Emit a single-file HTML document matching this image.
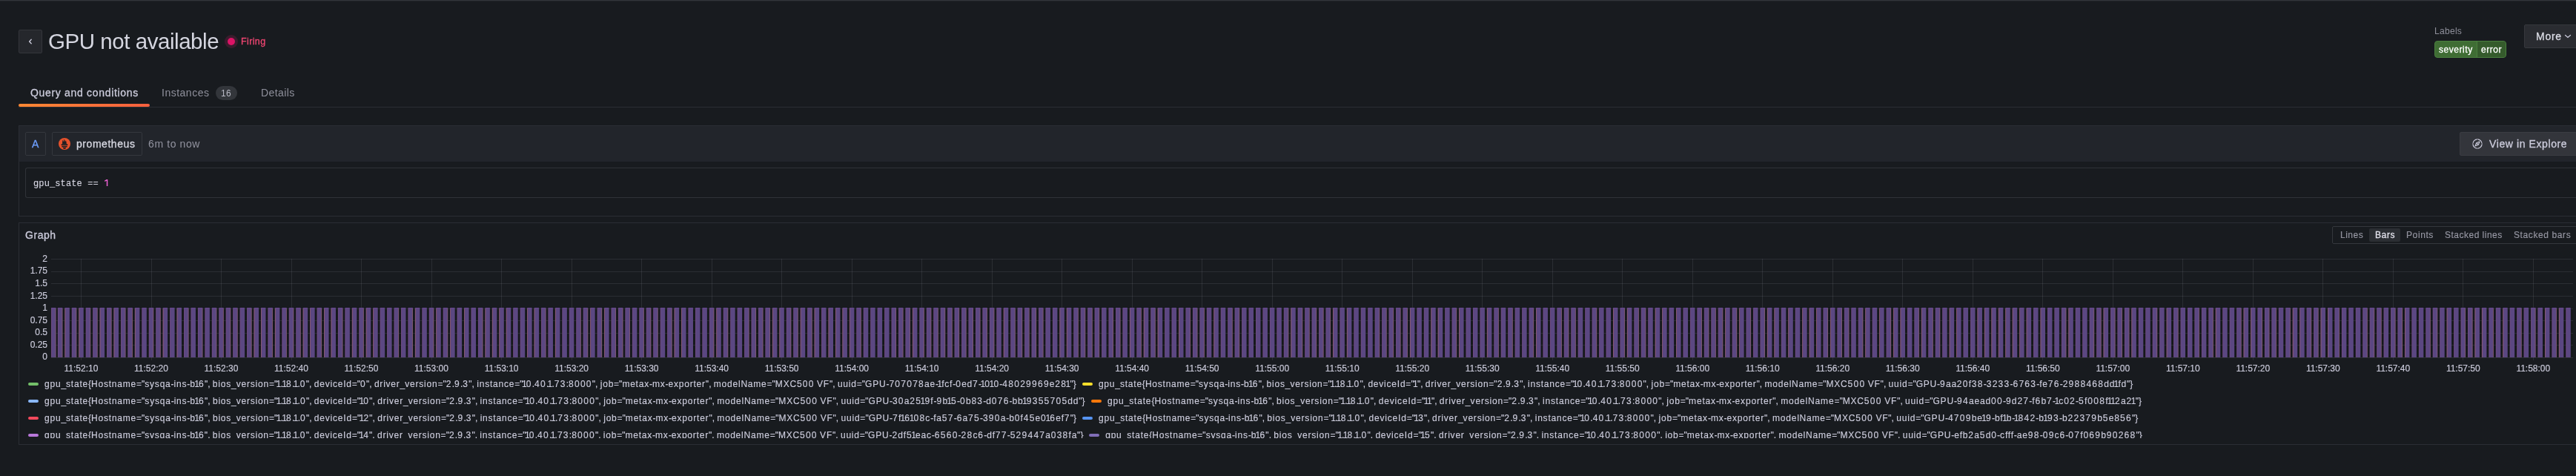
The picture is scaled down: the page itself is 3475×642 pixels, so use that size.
<!DOCTYPE html><html><head><meta charset="utf-8"><style>
.m{-webkit-text-stroke:0.3px currentColor}
.t{-webkit-text-stroke:0.15px currentColor}
.o1{letter-spacing:calc(var(--ls) - 1.624px);margin-left:-1.623px}
.od{letter-spacing:calc(var(--ls) + 0.474px)}
.op{letter-spacing:0}
*{box-sizing:border-box;margin:0;padding:0}
html,body{width:3475px;height:642px;overflow:hidden;background:#181b1f;}
body{position:relative;font-family:"Liberation Sans",sans-serif;color:#ccccdc;}
.a{position:absolute;white-space:pre;}
</style></head><body><div style="position:absolute;left:0;top:0;width:3475px;height:642px;will-change:transform"><div class="a" style="left:0;top:0;width:3475px;height:1px;background:#32353b"></div>
<div class="a" style="left:0;top:1px;width:3475px;height:1px;background:#1f2226"></div>
<div class="a" style="left:25px;top:40px;width:32px;height:32px;background:#25272c;border:1px solid #34363b;border-radius:2px"></div>
<svg class="a" style="left:37px;top:52px" width="8" height="8" viewBox="0 0 8 8"><path d="M5.2 1.2 L2.6 4 L5.2 6.8" stroke="#ccccdc" stroke-width="1.3" fill="none" stroke-linecap="round" stroke-linejoin="round"/></svg>
<div class="a" style="left:65px;top:36px;font-size:29.5px;line-height:40px;letter-spacing:-0.45px;color:#d5d6e0">GPU not available</div>
<div class="a" style="left:303px;top:47px;width:18px;height:18px;border-radius:50%;background:rgba(224,34,110,0.18)"></div>
<div class="a" style="left:307px;top:51px;width:10px;height:10px;border-radius:50%;background:#dc1466"></div>
<div class="a m" style="left:325px;top:48px;font-size:12.5px;line-height:16px;color:#f04672;letter-spacing:0.38px">Firing</div>
<div class="a" style="left:3284px;top:34px;letter-spacing:0.3px;font-size:12px;line-height:16px;color:rgba(204,204,220,0.65)">Labels</div>
<div class="a" style="left:3284px;top:55px;width:97px;height:23px;border-radius:4px;border:1px solid #4a7f3f;background:#3f6d34;overflow:hidden"><div class="a" style="left:56px;top:0;width:40px;height:23px;background:#355b2c;border-left:1px solid #4a7f3f"></div><div class="a m" style="left:5px;top:3px;font-size:12px;line-height:16px;color:#fff;letter-spacing:0.55px">severity</div><div class="a m" style="left:62px;top:3px;font-size:12px;line-height:16px;color:#fff;letter-spacing:0.55px">error</div></div>
<div class="a" style="left:3405px;top:33px;width:90px;height:32px;background:#2a2c31;border:1px solid #36383d;border-radius:2px"></div>
<div class="a m" style="left:3421px;top:41px;font-size:14px;line-height:16px;color:#dcdde6;letter-spacing:0.75px">More</div>
<svg class="a" style="left:3459px;top:45px" width="10" height="8" viewBox="0 0 10 8"><path d="M1.5 2.5 L5 5.5 L8.5 2.5" stroke="#ccccdc" stroke-width="1.2" fill="none" stroke-linecap="round"/></svg>
<div class="a" style="left:25px;top:144px;width:3450px;height:1px;background:#2b2e34"></div>
<div class="a" style="left:25px;top:140px;width:177px;height:4px;border-radius:2px;background:linear-gradient(90deg,#ff8833,#f55f3e)"></div>
<div class="a m" style="left:41px;top:117px;font-size:14px;line-height:16px;color:#ccccdc;letter-spacing:0.68px">Query and conditions</div>
<div class="a" style="left:218px;top:117px;font-size:14px;line-height:16px;color:rgba(204,204,220,0.65);letter-spacing:0.5px">Instances</div>
<div class="a" style="left:291px;top:116px;width:29px;height:19px;border-radius:10px;background:#33363b"></div>
<div class="a" style="left:298px;top:118px;font-size:12px;line-height:16px;color:#b9bac6;letter-spacing:0.3px">16</div>
<div class="a" style="left:352px;top:117px;font-size:14px;line-height:16px;color:rgba(204,204,220,0.65);letter-spacing:0.4px">Details</div>
<div class="a" style="left:25px;top:169px;width:3475px;height:123px;border:1px solid #2b2e34;border-right:none"></div>
<div class="a" style="left:26px;top:170px;width:3475px;height:48px;background:#22252b"></div>
<div class="a" style="left:34px;top:178px;width:28px;height:32px;border:1px solid #34373d;border-radius:2px"></div>
<div class="a m" style="left:43px;top:186px;font-size:14px;line-height:16px;color:#6e9fff">A</div>
<div class="a" style="left:70px;top:178px;width:122px;height:32px;border:1px solid #34373d;border-radius:2px"></div>
<svg class="a" style="left:79px;top:186px" width="16" height="16" viewBox="0 0 16 16"><circle cx="8" cy="8" r="8" fill="#e6522c"/><path d="M5.1 8 C5.0 6.6 5.2 4.4 5.6 2.6 C5.9 3.6 6.3 4.6 6.8 5.4 C6.9 4.0 7.3 2.6 7.7 1.5 C8.1 2.8 8.6 4.4 8.8 5.6 C9.2 4.8 9.6 4.0 9.8 3.3 C10.3 4.6 10.8 6.4 10.8 8 Z" fill="#1d1f23"/><rect x="3.7" y="8.2" width="8.6" height="2.1" rx="0.5" fill="#1d1f23"/><rect x="4.3" y="10.9" width="7.4" height="1.5" rx="0.4" fill="#1d1f23"/><path d="M5.9 13 L10.1 13 C10 14.2 9.1 14.9 8 14.9 C6.9 14.9 6 14.2 5.9 13 Z" fill="#1d1f23"/></svg>
<div class="a m" style="left:103px;top:186px;font-size:14px;line-height:16px;color:#d8d9e3;letter-spacing:0.55px">prometheus</div>
<div class="a" style="left:200px;top:186px;font-size:14px;line-height:16px;color:rgba(204,204,220,0.65);letter-spacing:0.6px">6m to now</div>
<div class="a" style="left:3318px;top:178px;width:200px;height:32px;background:#33353b;border:1px solid #3b3d43;border-radius:2px"></div>
<svg class="a" style="left:3335px;top:187px" width="14" height="14" viewBox="0 0 14 14"><circle cx="7" cy="7" r="6.1" stroke="#ccccdc" stroke-width="1.2" fill="none"/><path d="M7 0.6 V2 M7 12 V13.4 M0.6 7 H2 M12 7 H13.4" stroke="#33353b" stroke-width="0.9"/><path d="M10 4 L8.3 8.3 L4 10 L5.7 5.7 Z" stroke="#ccccdc" stroke-width="1.1" fill="none" stroke-linejoin="round"/><circle cx="7" cy="7" r="0.9" fill="#ccccdc"/></svg>
<div class="a m" style="left:3358px;top:186px;font-size:14px;line-height:16px;color:#ccccdc;letter-spacing:0.6px">View in Explore</div>
<div class="a" style="left:34px;top:226px;width:3475px;height:41px;border:1px solid #2f3237;border-right:none;border-radius:3px"></div>
<div class="a t" style="left:45px;top:240px;font-family:'Liberation Mono',monospace;font-size:12px;line-height:16px;color:#d4d4e0;letter-spacing:0.12px">gpu_state == </div>
<svg class="a" style="left:140px;top:241px" width="8" height="11" viewBox="0 0 8 11"><rect x="3.8" y="1" width="1.5" height="9" fill="#ee62d4"/><path d="M1.2 2.5 L3.8 1 L4.2 2.6 L1.2 3.9 Z" fill="#ee62d4"/></svg>
<div class="a" style="left:25px;top:300px;width:3475px;height:300px;border:1px solid #2b2e34;border-right:none"></div>
<div class="a m" style="left:34px;top:309px;font-size:14px;line-height:16px;color:#ccccdc;letter-spacing:0.55px">Graph</div>
<div class="a" style="left:3146px;top:305px;width:400px;height:24px;border:1px solid #34373d;border-radius:2px"></div>
<div class="a" style="left:3196px;top:308px;width:42px;height:18px;background:#2b2e33;border-radius:2px"></div>
<div class="a t" style="left:3157px;top:309px;font-size:12px;line-height:16px;color:rgba(204,204,220,0.65);letter-spacing:0.5px">Lines</div>
<div class="a m" style="left:3204px;top:309px;font-size:12px;line-height:16px;color:#e0e0ea;letter-spacing:0.6px">Bars</div>
<div class="a t" style="left:3246px;top:309px;font-size:12px;line-height:16px;color:rgba(204,204,220,0.65);letter-spacing:0.6px">Points</div>
<div class="a t" style="left:3298px;top:309px;font-size:12px;line-height:16px;color:rgba(204,204,220,0.65);letter-spacing:0.49px">Stacked lines</div>
<div class="a t" style="left:3391px;top:309px;font-size:12px;line-height:16px;color:rgba(204,204,220,0.65);letter-spacing:0.6px">Stacked bars</div>
<svg class="a" style="left:0;top:0" width="3475" height="642" viewBox="0 0 3475 642" shape-rendering="auto"><rect x="69" y="415" width="3402" height="67" fill="#15181b"/><rect x="69" y="349" width="3402" height="1" fill="rgba(204,204,220,0.11)"/><rect x="69" y="366" width="3402" height="1" fill="rgba(204,204,220,0.11)"/><rect x="69" y="382" width="3402" height="1" fill="rgba(204,204,220,0.11)"/><rect x="69" y="399" width="3402" height="1" fill="rgba(204,204,220,0.11)"/><rect x="69" y="416" width="3402" height="1" fill="rgba(204,204,220,0.11)"/><rect x="69" y="432" width="3402" height="1" fill="rgba(204,204,220,0.11)"/><rect x="69" y="449" width="3402" height="1" fill="rgba(204,204,220,0.11)"/><rect x="69" y="465" width="3402" height="1" fill="rgba(204,204,220,0.11)"/><rect x="69" y="482" width="3402" height="1" fill="rgba(204,204,220,0.11)"/><rect x="109" y="349" width="1" height="137" fill="rgba(204,204,220,0.11)"/><rect x="204" y="349" width="1" height="137" fill="rgba(204,204,220,0.11)"/><rect x="298" y="349" width="1" height="137" fill="rgba(204,204,220,0.11)"/><rect x="393" y="349" width="1" height="137" fill="rgba(204,204,220,0.11)"/><rect x="487" y="349" width="1" height="137" fill="rgba(204,204,220,0.11)"/><rect x="582" y="349" width="1" height="137" fill="rgba(204,204,220,0.11)"/><rect x="676" y="349" width="1" height="137" fill="rgba(204,204,220,0.11)"/><rect x="771" y="349" width="1" height="137" fill="rgba(204,204,220,0.11)"/><rect x="865" y="349" width="1" height="137" fill="rgba(204,204,220,0.11)"/><rect x="960" y="349" width="1" height="137" fill="rgba(204,204,220,0.11)"/><rect x="1054" y="349" width="1" height="137" fill="rgba(204,204,220,0.11)"/><rect x="1149" y="349" width="1" height="137" fill="rgba(204,204,220,0.11)"/><rect x="1243" y="349" width="1" height="137" fill="rgba(204,204,220,0.11)"/><rect x="1338" y="349" width="1" height="137" fill="rgba(204,204,220,0.11)"/><rect x="1432" y="349" width="1" height="137" fill="rgba(204,204,220,0.11)"/><rect x="1527" y="349" width="1" height="137" fill="rgba(204,204,220,0.11)"/><rect x="1621" y="349" width="1" height="137" fill="rgba(204,204,220,0.11)"/><rect x="1716" y="349" width="1" height="137" fill="rgba(204,204,220,0.11)"/><rect x="1810" y="349" width="1" height="137" fill="rgba(204,204,220,0.11)"/><rect x="1905" y="349" width="1" height="137" fill="rgba(204,204,220,0.11)"/><rect x="1999" y="349" width="1" height="137" fill="rgba(204,204,220,0.11)"/><rect x="2094" y="349" width="1" height="137" fill="rgba(204,204,220,0.11)"/><rect x="2188" y="349" width="1" height="137" fill="rgba(204,204,220,0.11)"/><rect x="2283" y="349" width="1" height="137" fill="rgba(204,204,220,0.11)"/><rect x="2377" y="349" width="1" height="137" fill="rgba(204,204,220,0.11)"/><rect x="2472" y="349" width="1" height="137" fill="rgba(204,204,220,0.11)"/><rect x="2566" y="349" width="1" height="137" fill="rgba(204,204,220,0.11)"/><rect x="2661" y="349" width="1" height="137" fill="rgba(204,204,220,0.11)"/><rect x="2755" y="349" width="1" height="137" fill="rgba(204,204,220,0.11)"/><rect x="2850" y="349" width="1" height="137" fill="rgba(204,204,220,0.11)"/><rect x="2944" y="349" width="1" height="137" fill="rgba(204,204,220,0.11)"/><rect x="3039" y="349" width="1" height="137" fill="rgba(204,204,220,0.11)"/><rect x="3133" y="349" width="1" height="137" fill="rgba(204,204,220,0.11)"/><rect x="3228" y="349" width="1" height="137" fill="rgba(204,204,220,0.11)"/><rect x="3322" y="349" width="1" height="137" fill="rgba(204,204,220,0.11)"/><rect x="3417" y="349" width="1" height="137" fill="rgba(204,204,220,0.11)"/><rect x="69.00" y="415" width="6.5" height="67" fill="#5b4782"/><rect x="69.80" y="415" width="4.90" height="1.6" fill="#64468a"/><rect x="69.00" y="416" width="0.9" height="66" fill="rgba(150,80,130,0.35)"/><rect x="74.60" y="416" width="0.9" height="66" fill="rgba(170,110,100,0.45)"/><rect x="77.90" y="415" width="6.5" height="67" fill="#5b4782"/><rect x="78.70" y="415" width="4.90" height="1.6" fill="#64468a"/><rect x="77.90" y="416" width="0.9" height="66" fill="rgba(150,80,130,0.35)"/><rect x="83.50" y="416" width="0.9" height="66" fill="rgba(170,110,100,0.45)"/><rect x="87.35" y="415" width="6.5" height="67" fill="#5b4782"/><rect x="88.15" y="415" width="4.90" height="1.6" fill="#64468a"/><rect x="87.35" y="416" width="0.9" height="66" fill="rgba(150,80,130,0.35)"/><rect x="87.35" y="416" width="0.9" height="66" fill="rgba(170,110,100,0.45)"/><rect x="96.80" y="415" width="6.5" height="67" fill="#5b4782"/><rect x="97.60" y="415" width="4.90" height="1.6" fill="#64468a"/><rect x="96.80" y="416" width="0.9" height="66" fill="rgba(150,80,130,0.35)"/><rect x="102.40" y="416" width="0.9" height="66" fill="rgba(170,110,100,0.45)"/><rect x="106.25" y="415" width="6.5" height="67" fill="#5b4782"/><rect x="107.05" y="415" width="4.90" height="1.6" fill="#64468a"/><rect x="106.25" y="416" width="0.9" height="66" fill="rgba(150,80,130,0.35)"/><rect x="106.25" y="416" width="0.9" height="66" fill="rgba(170,110,100,0.45)"/><rect x="115.70" y="415" width="6.5" height="67" fill="#5b4782"/><rect x="116.50" y="415" width="4.90" height="1.6" fill="#64468a"/><rect x="115.70" y="416" width="0.9" height="66" fill="rgba(150,80,130,0.35)"/><rect x="121.30" y="416" width="0.9" height="66" fill="rgba(170,110,100,0.45)"/><rect x="125.15" y="415" width="6.5" height="67" fill="#5b4782"/><rect x="125.95" y="415" width="4.90" height="1.6" fill="#64468a"/><rect x="125.15" y="416" width="0.9" height="66" fill="rgba(150,80,130,0.35)"/><rect x="130.75" y="416" width="0.9" height="66" fill="rgba(170,110,100,0.45)"/><rect x="134.60" y="415" width="6.5" height="67" fill="#5b4782"/><rect x="135.40" y="415" width="4.90" height="1.6" fill="#64468a"/><rect x="134.60" y="416" width="0.9" height="66" fill="rgba(150,80,130,0.35)"/><rect x="134.60" y="416" width="0.9" height="66" fill="rgba(170,110,100,0.45)"/><rect x="144.05" y="415" width="6.5" height="67" fill="#5b4782"/><rect x="144.85" y="415" width="4.90" height="1.6" fill="#64468a"/><rect x="144.05" y="416" width="0.9" height="66" fill="rgba(150,80,130,0.35)"/><rect x="149.65" y="416" width="0.9" height="66" fill="rgba(170,110,100,0.45)"/><rect x="153.50" y="415" width="6.5" height="67" fill="#5b4782"/><rect x="154.30" y="415" width="4.90" height="1.6" fill="#64468a"/><rect x="153.50" y="416" width="0.9" height="66" fill="rgba(150,80,130,0.35)"/><rect x="153.50" y="416" width="0.9" height="66" fill="rgba(170,110,100,0.45)"/><rect x="162.96" y="415" width="6.5" height="67" fill="#5b4782"/><rect x="163.76" y="415" width="4.90" height="1.6" fill="#64468a"/><rect x="162.96" y="416" width="0.9" height="66" fill="rgba(150,80,130,0.35)"/><rect x="168.56" y="416" width="0.9" height="66" fill="rgba(170,110,100,0.45)"/><rect x="172.41" y="415" width="6.5" height="67" fill="#5b4782"/><rect x="173.21" y="415" width="4.90" height="1.6" fill="#64468a"/><rect x="172.41" y="416" width="0.9" height="66" fill="rgba(150,80,130,0.35)"/><rect x="178.01" y="416" width="0.9" height="66" fill="rgba(170,110,100,0.45)"/><rect x="181.86" y="415" width="6.5" height="67" fill="#5b4782"/><rect x="182.66" y="415" width="4.90" height="1.6" fill="#64468a"/><rect x="181.86" y="416" width="0.9" height="66" fill="rgba(150,80,130,0.35)"/><rect x="181.86" y="416" width="0.9" height="66" fill="rgba(170,110,100,0.45)"/><rect x="191.31" y="415" width="6.5" height="67" fill="#5b4782"/><rect x="192.11" y="415" width="4.90" height="1.6" fill="#64468a"/><rect x="191.31" y="416" width="0.9" height="66" fill="rgba(150,80,130,0.35)"/><rect x="200.76" y="415" width="6.5" height="67" fill="#5b4782"/><rect x="201.56" y="415" width="4.90" height="1.6" fill="#64468a"/><rect x="200.76" y="416" width="0.9" height="66" fill="rgba(150,80,130,0.35)"/><rect x="206.36" y="416" width="0.9" height="66" fill="rgba(170,110,100,0.45)"/><rect x="210.21" y="415" width="6.5" height="67" fill="#5b4782"/><rect x="211.01" y="415" width="4.90" height="1.6" fill="#64468a"/><rect x="210.21" y="416" width="0.9" height="66" fill="rgba(150,80,130,0.35)"/><rect x="215.81" y="416" width="0.9" height="66" fill="rgba(170,110,100,0.45)"/><rect x="219.66" y="415" width="6.5" height="67" fill="#5b4782"/><rect x="220.46" y="415" width="4.90" height="1.6" fill="#64468a"/><rect x="219.66" y="416" width="0.9" height="66" fill="rgba(150,80,130,0.35)"/><rect x="219.66" y="416" width="0.9" height="66" fill="rgba(170,110,100,0.45)"/><rect x="229.11" y="415" width="6.5" height="67" fill="#5b4782"/><rect x="229.91" y="415" width="4.90" height="1.6" fill="#64468a"/><rect x="229.11" y="416" width="0.9" height="66" fill="rgba(150,80,130,0.35)"/><rect x="238.56" y="415" width="6.5" height="67" fill="#5b4782"/><rect x="239.36" y="415" width="4.90" height="1.6" fill="#64468a"/><rect x="238.56" y="416" width="0.9" height="66" fill="rgba(150,80,130,0.35)"/><rect x="238.56" y="416" width="0.9" height="66" fill="rgba(170,110,100,0.45)"/><rect x="248.01" y="415" width="6.5" height="67" fill="#5b4782"/><rect x="248.81" y="415" width="4.90" height="1.6" fill="#64468a"/><rect x="248.01" y="416" width="0.9" height="66" fill="rgba(150,80,130,0.35)"/><rect x="253.61" y="416" width="0.9" height="66" fill="rgba(170,110,100,0.45)"/><rect x="257.46" y="415" width="6.5" height="67" fill="#5b4782"/><rect x="258.26" y="415" width="4.90" height="1.6" fill="#64468a"/><rect x="257.46" y="416" width="0.9" height="66" fill="rgba(150,80,130,0.35)"/><rect x="266.92" y="415" width="6.5" height="67" fill="#5b4782"/><rect x="267.72" y="415" width="4.90" height="1.6" fill="#64468a"/><rect x="266.92" y="416" width="0.9" height="66" fill="rgba(150,80,130,0.35)"/><rect x="272.52" y="416" width="0.9" height="66" fill="rgba(170,110,100,0.45)"/><rect x="276.37" y="415" width="6.5" height="67" fill="#5b4782"/><rect x="277.17" y="415" width="4.90" height="1.6" fill="#64468a"/><rect x="276.37" y="416" width="0.9" height="66" fill="rgba(150,80,130,0.35)"/><rect x="285.82" y="415" width="6.5" height="67" fill="#5b4782"/><rect x="286.62" y="415" width="4.90" height="1.6" fill="#64468a"/><rect x="285.82" y="416" width="0.9" height="66" fill="rgba(150,80,130,0.35)"/><rect x="291.42" y="416" width="0.9" height="66" fill="rgba(170,110,100,0.45)"/><rect x="295.27" y="415" width="6.5" height="67" fill="#5b4782"/><rect x="296.07" y="415" width="4.90" height="1.6" fill="#64468a"/><rect x="295.27" y="416" width="0.9" height="66" fill="rgba(150,80,130,0.35)"/><rect x="300.87" y="416" width="0.9" height="66" fill="rgba(170,110,100,0.45)"/><rect x="304.72" y="415" width="6.5" height="67" fill="#5b4782"/><rect x="305.52" y="415" width="4.90" height="1.6" fill="#64468a"/><rect x="304.72" y="416" width="0.9" height="66" fill="rgba(150,80,130,0.35)"/><rect x="310.32" y="416" width="0.9" height="66" fill="rgba(170,110,100,0.45)"/><rect x="314.17" y="415" width="6.5" height="67" fill="#5b4782"/><rect x="314.97" y="415" width="4.90" height="1.6" fill="#64468a"/><rect x="314.17" y="416" width="0.9" height="66" fill="rgba(150,80,130,0.35)"/><rect x="319.77" y="416" width="0.9" height="66" fill="rgba(170,110,100,0.45)"/><rect x="323.62" y="415" width="6.5" height="67" fill="#5b4782"/><rect x="324.42" y="415" width="4.90" height="1.6" fill="#64468a"/><rect x="323.62" y="416" width="0.9" height="66" fill="rgba(150,80,130,0.35)"/><rect x="333.07" y="415" width="6.5" height="67" fill="#5b4782"/><rect x="333.87" y="415" width="4.90" height="1.6" fill="#64468a"/><rect x="333.07" y="416" width="0.9" height="66" fill="rgba(150,80,130,0.35)"/><rect x="338.67" y="416" width="0.9" height="66" fill="rgba(170,110,100,0.45)"/><rect x="342.52" y="415" width="6.5" height="67" fill="#5b4782"/><rect x="343.32" y="415" width="4.90" height="1.6" fill="#64468a"/><rect x="342.52" y="416" width="0.9" height="66" fill="rgba(150,80,130,0.35)"/><rect x="342.52" y="416" width="0.9" height="66" fill="rgba(170,110,100,0.45)"/><rect x="351.97" y="415" width="6.5" height="67" fill="#5b4782"/><rect x="352.77" y="415" width="4.90" height="1.6" fill="#64468a"/><rect x="351.97" y="416" width="0.9" height="66" fill="rgba(150,80,130,0.35)"/><rect x="351.97" y="416" width="0.9" height="66" fill="rgba(170,110,100,0.45)"/><rect x="361.42" y="415" width="6.5" height="67" fill="#5b4782"/><rect x="362.22" y="415" width="4.90" height="1.6" fill="#64468a"/><rect x="361.42" y="416" width="0.9" height="66" fill="rgba(150,80,130,0.35)"/><rect x="367.02" y="416" width="0.9" height="66" fill="rgba(170,110,100,0.45)"/><rect x="370.88" y="415" width="6.5" height="67" fill="#5b4782"/><rect x="371.68" y="415" width="4.90" height="1.6" fill="#64468a"/><rect x="370.88" y="416" width="0.9" height="66" fill="rgba(150,80,130,0.35)"/><rect x="370.88" y="416" width="0.9" height="66" fill="rgba(170,110,100,0.45)"/><rect x="380.33" y="415" width="6.5" height="67" fill="#5b4782"/><rect x="381.13" y="415" width="4.90" height="1.6" fill="#64468a"/><rect x="380.33" y="416" width="0.9" height="66" fill="rgba(150,80,130,0.35)"/><rect x="385.93" y="416" width="0.9" height="66" fill="rgba(170,110,100,0.45)"/><rect x="389.78" y="415" width="6.5" height="67" fill="#5b4782"/><rect x="390.58" y="415" width="4.90" height="1.6" fill="#64468a"/><rect x="389.78" y="416" width="0.9" height="66" fill="rgba(150,80,130,0.35)"/><rect x="395.38" y="416" width="0.9" height="66" fill="rgba(170,110,100,0.45)"/><rect x="399.23" y="415" width="6.5" height="67" fill="#5b4782"/><rect x="400.03" y="415" width="4.90" height="1.6" fill="#64468a"/><rect x="399.23" y="416" width="0.9" height="66" fill="rgba(150,80,130,0.35)"/><rect x="404.83" y="416" width="0.9" height="66" fill="rgba(170,110,100,0.45)"/><rect x="408.68" y="415" width="6.5" height="67" fill="#5b4782"/><rect x="409.48" y="415" width="4.90" height="1.6" fill="#64468a"/><rect x="408.68" y="416" width="0.9" height="66" fill="rgba(150,80,130,0.35)"/><rect x="408.68" y="416" width="0.9" height="66" fill="rgba(170,110,100,0.45)"/><rect x="418.13" y="415" width="6.5" height="67" fill="#5b4782"/><rect x="418.93" y="415" width="4.90" height="1.6" fill="#64468a"/><rect x="418.13" y="416" width="0.9" height="66" fill="rgba(150,80,130,0.35)"/><rect x="418.13" y="416" width="0.9" height="66" fill="rgba(170,110,100,0.45)"/><rect x="427.58" y="415" width="6.5" height="67" fill="#5b4782"/><rect x="428.38" y="415" width="4.90" height="1.6" fill="#64468a"/><rect x="427.58" y="416" width="0.9" height="66" fill="rgba(150,80,130,0.35)"/><rect x="433.18" y="416" width="0.9" height="66" fill="rgba(170,110,100,0.45)"/><rect x="437.03" y="415" width="6.5" height="67" fill="#5b4782"/><rect x="437.83" y="415" width="4.90" height="1.6" fill="#64468a"/><rect x="437.03" y="416" width="0.9" height="66" fill="rgba(150,80,130,0.35)"/><rect x="437.03" y="416" width="0.9" height="66" fill="rgba(170,110,100,0.45)"/><rect x="446.48" y="415" width="6.5" height="67" fill="#5b4782"/><rect x="447.28" y="415" width="4.90" height="1.6" fill="#64468a"/><rect x="446.48" y="416" width="0.9" height="66" fill="rgba(150,80,130,0.35)"/><rect x="446.48" y="416" width="0.9" height="66" fill="rgba(170,110,100,0.45)"/><rect x="455.93" y="415" width="6.5" height="67" fill="#5b4782"/><rect x="456.73" y="415" width="4.90" height="1.6" fill="#64468a"/><rect x="455.93" y="416" width="0.9" height="66" fill="rgba(150,80,130,0.35)"/><rect x="461.53" y="416" width="0.9" height="66" fill="rgba(170,110,100,0.45)"/><rect x="465.38" y="415" width="6.5" height="67" fill="#5b4782"/><rect x="466.18" y="415" width="4.90" height="1.6" fill="#64468a"/><rect x="465.38" y="416" width="0.9" height="66" fill="rgba(150,80,130,0.35)"/><rect x="474.84" y="415" width="6.5" height="67" fill="#5b4782"/><rect x="475.64" y="415" width="4.90" height="1.6" fill="#64468a"/><rect x="474.84" y="416" width="0.9" height="66" fill="rgba(150,80,130,0.35)"/><rect x="474.84" y="416" width="0.9" height="66" fill="rgba(170,110,100,0.45)"/><rect x="484.29" y="415" width="6.5" height="67" fill="#5b4782"/><rect x="485.09" y="415" width="4.90" height="1.6" fill="#64468a"/><rect x="484.29" y="416" width="0.9" height="66" fill="rgba(150,80,130,0.35)"/><rect x="489.89" y="416" width="0.9" height="66" fill="rgba(170,110,100,0.45)"/><rect x="493.74" y="415" width="6.5" height="67" fill="#5b4782"/><rect x="494.54" y="415" width="4.90" height="1.6" fill="#64468a"/><rect x="493.74" y="416" width="0.9" height="66" fill="rgba(150,80,130,0.35)"/><rect x="493.74" y="416" width="0.9" height="66" fill="rgba(170,110,100,0.45)"/><rect x="503.19" y="415" width="6.5" height="67" fill="#5b4782"/><rect x="503.99" y="415" width="4.90" height="1.6" fill="#64468a"/><rect x="503.19" y="416" width="0.9" height="66" fill="rgba(150,80,130,0.35)"/><rect x="503.19" y="416" width="0.9" height="66" fill="rgba(170,110,100,0.45)"/><rect x="512.64" y="415" width="6.5" height="67" fill="#5b4782"/><rect x="513.44" y="415" width="4.90" height="1.6" fill="#64468a"/><rect x="512.64" y="416" width="0.9" height="66" fill="rgba(150,80,130,0.35)"/><rect x="522.09" y="415" width="6.5" height="67" fill="#5b4782"/><rect x="522.89" y="415" width="4.90" height="1.6" fill="#64468a"/><rect x="522.09" y="416" width="0.9" height="66" fill="rgba(150,80,130,0.35)"/><rect x="531.54" y="415" width="6.5" height="67" fill="#5b4782"/><rect x="532.34" y="415" width="4.90" height="1.6" fill="#64468a"/><rect x="531.54" y="416" width="0.9" height="66" fill="rgba(150,80,130,0.35)"/><rect x="537.14" y="416" width="0.9" height="66" fill="rgba(170,110,100,0.45)"/><rect x="540.99" y="415" width="6.5" height="67" fill="#5b4782"/><rect x="541.79" y="415" width="4.90" height="1.6" fill="#64468a"/><rect x="540.99" y="416" width="0.9" height="66" fill="rgba(150,80,130,0.35)"/><rect x="550.44" y="415" width="6.5" height="67" fill="#5b4782"/><rect x="551.24" y="415" width="4.90" height="1.6" fill="#64468a"/><rect x="550.44" y="416" width="0.9" height="66" fill="rgba(150,80,130,0.35)"/><rect x="556.04" y="416" width="0.9" height="66" fill="rgba(170,110,100,0.45)"/><rect x="559.89" y="415" width="6.5" height="67" fill="#5b4782"/><rect x="560.69" y="415" width="4.90" height="1.6" fill="#64468a"/><rect x="559.89" y="416" width="0.9" height="66" fill="rgba(150,80,130,0.35)"/><rect x="559.89" y="416" width="0.9" height="66" fill="rgba(170,110,100,0.45)"/><rect x="569.34" y="415" width="6.5" height="67" fill="#5b4782"/><rect x="570.14" y="415" width="4.90" height="1.6" fill="#64468a"/><rect x="569.34" y="416" width="0.9" height="66" fill="rgba(150,80,130,0.35)"/><rect x="578.80" y="415" width="6.5" height="67" fill="#5b4782"/><rect x="579.60" y="415" width="4.90" height="1.6" fill="#64468a"/><rect x="578.80" y="416" width="0.9" height="66" fill="rgba(150,80,130,0.35)"/><rect x="584.40" y="416" width="0.9" height="66" fill="rgba(170,110,100,0.45)"/><rect x="588.25" y="415" width="6.5" height="67" fill="#5b4782"/><rect x="589.05" y="415" width="4.90" height="1.6" fill="#64468a"/><rect x="588.25" y="416" width="0.9" height="66" fill="rgba(150,80,130,0.35)"/><rect x="588.25" y="416" width="0.9" height="66" fill="rgba(170,110,100,0.45)"/><rect x="597.70" y="415" width="6.5" height="67" fill="#5b4782"/><rect x="598.50" y="415" width="4.90" height="1.6" fill="#64468a"/><rect x="597.70" y="416" width="0.9" height="66" fill="rgba(150,80,130,0.35)"/><rect x="603.30" y="416" width="0.9" height="66" fill="rgba(170,110,100,0.45)"/><rect x="607.15" y="415" width="6.5" height="67" fill="#5b4782"/><rect x="607.95" y="415" width="4.90" height="1.6" fill="#64468a"/><rect x="607.15" y="416" width="0.9" height="66" fill="rgba(150,80,130,0.35)"/><rect x="607.15" y="416" width="0.9" height="66" fill="rgba(170,110,100,0.45)"/><rect x="616.60" y="415" width="6.5" height="67" fill="#5b4782"/><rect x="617.40" y="415" width="4.90" height="1.6" fill="#64468a"/><rect x="616.60" y="416" width="0.9" height="66" fill="rgba(150,80,130,0.35)"/><rect x="626.05" y="415" width="6.5" height="67" fill="#5b4782"/><rect x="626.85" y="415" width="4.90" height="1.6" fill="#64468a"/><rect x="626.05" y="416" width="0.9" height="66" fill="rgba(150,80,130,0.35)"/><rect x="626.05" y="416" width="0.9" height="66" fill="rgba(170,110,100,0.45)"/><rect x="635.50" y="415" width="6.5" height="67" fill="#5b4782"/><rect x="636.30" y="415" width="4.90" height="1.6" fill="#64468a"/><rect x="635.50" y="416" width="0.9" height="66" fill="rgba(150,80,130,0.35)"/><rect x="644.95" y="415" width="6.5" height="67" fill="#5b4782"/><rect x="645.75" y="415" width="4.90" height="1.6" fill="#64468a"/><rect x="644.95" y="416" width="0.9" height="66" fill="rgba(150,80,130,0.35)"/><rect x="650.55" y="416" width="0.9" height="66" fill="rgba(170,110,100,0.45)"/><rect x="654.40" y="415" width="6.5" height="67" fill="#5b4782"/><rect x="655.20" y="415" width="4.90" height="1.6" fill="#64468a"/><rect x="654.40" y="416" width="0.9" height="66" fill="rgba(150,80,130,0.35)"/><rect x="654.40" y="416" width="0.9" height="66" fill="rgba(170,110,100,0.45)"/><rect x="663.85" y="415" width="6.5" height="67" fill="#5b4782"/><rect x="664.65" y="415" width="4.90" height="1.6" fill="#64468a"/><rect x="663.85" y="416" width="0.9" height="66" fill="rgba(150,80,130,0.35)"/><rect x="663.85" y="416" width="0.9" height="66" fill="rgba(170,110,100,0.45)"/><rect x="673.30" y="415" width="6.5" height="67" fill="#5b4782"/><rect x="674.10" y="415" width="4.90" height="1.6" fill="#64468a"/><rect x="673.30" y="416" width="0.9" height="66" fill="rgba(150,80,130,0.35)"/><rect x="673.30" y="416" width="0.9" height="66" fill="rgba(170,110,100,0.45)"/><rect x="682.75" y="415" width="6.5" height="67" fill="#5b4782"/><rect x="683.55" y="415" width="4.90" height="1.6" fill="#64468a"/><rect x="682.75" y="416" width="0.9" height="66" fill="rgba(150,80,130,0.35)"/><rect x="682.75" y="416" width="0.9" height="66" fill="rgba(170,110,100,0.45)"/><rect x="692.21" y="415" width="6.5" height="67" fill="#5b4782"/><rect x="693.01" y="415" width="4.90" height="1.6" fill="#64468a"/><rect x="692.21" y="416" width="0.9" height="66" fill="rgba(150,80,130,0.35)"/><rect x="701.66" y="415" width="6.5" height="67" fill="#5b4782"/><rect x="702.46" y="415" width="4.90" height="1.6" fill="#64468a"/><rect x="701.66" y="416" width="0.9" height="66" fill="rgba(150,80,130,0.35)"/><rect x="711.11" y="415" width="6.5" height="67" fill="#5b4782"/><rect x="711.91" y="415" width="4.90" height="1.6" fill="#64468a"/><rect x="711.11" y="416" width="0.9" height="66" fill="rgba(150,80,130,0.35)"/><rect x="711.11" y="416" width="0.9" height="66" fill="rgba(170,110,100,0.45)"/><rect x="720.56" y="415" width="6.5" height="67" fill="#5b4782"/><rect x="721.36" y="415" width="4.90" height="1.6" fill="#64468a"/><rect x="720.56" y="416" width="0.9" height="66" fill="rgba(150,80,130,0.35)"/><rect x="720.56" y="416" width="0.9" height="66" fill="rgba(170,110,100,0.45)"/><rect x="730.01" y="415" width="6.5" height="67" fill="#5b4782"/><rect x="730.81" y="415" width="4.90" height="1.6" fill="#64468a"/><rect x="730.01" y="416" width="0.9" height="66" fill="rgba(150,80,130,0.35)"/><rect x="735.61" y="416" width="0.9" height="66" fill="rgba(170,110,100,0.45)"/><rect x="739.46" y="415" width="6.5" height="67" fill="#5b4782"/><rect x="740.26" y="415" width="4.90" height="1.6" fill="#64468a"/><rect x="739.46" y="416" width="0.9" height="66" fill="rgba(150,80,130,0.35)"/><rect x="748.91" y="415" width="6.5" height="67" fill="#5b4782"/><rect x="749.71" y="415" width="4.90" height="1.6" fill="#64468a"/><rect x="748.91" y="416" width="0.9" height="66" fill="rgba(150,80,130,0.35)"/><rect x="748.91" y="416" width="0.9" height="66" fill="rgba(170,110,100,0.45)"/><rect x="758.36" y="415" width="6.5" height="67" fill="#5b4782"/><rect x="759.16" y="415" width="4.90" height="1.6" fill="#64468a"/><rect x="758.36" y="416" width="0.9" height="66" fill="rgba(150,80,130,0.35)"/><rect x="767.81" y="415" width="6.5" height="67" fill="#5b4782"/><rect x="768.61" y="415" width="4.90" height="1.6" fill="#64468a"/><rect x="767.81" y="416" width="0.9" height="66" fill="rgba(150,80,130,0.35)"/><rect x="777.26" y="415" width="6.5" height="67" fill="#5b4782"/><rect x="778.06" y="415" width="4.90" height="1.6" fill="#64468a"/><rect x="777.26" y="416" width="0.9" height="66" fill="rgba(150,80,130,0.35)"/><rect x="782.86" y="416" width="0.9" height="66" fill="rgba(170,110,100,0.45)"/><rect x="786.71" y="415" width="6.5" height="67" fill="#5b4782"/><rect x="787.51" y="415" width="4.90" height="1.6" fill="#64468a"/><rect x="786.71" y="416" width="0.9" height="66" fill="rgba(150,80,130,0.35)"/><rect x="792.31" y="416" width="0.9" height="66" fill="rgba(170,110,100,0.45)"/><rect x="796.17" y="415" width="6.5" height="67" fill="#5b4782"/><rect x="796.97" y="415" width="4.90" height="1.6" fill="#64468a"/><rect x="796.17" y="416" width="0.9" height="66" fill="rgba(150,80,130,0.35)"/><rect x="796.17" y="416" width="0.9" height="66" fill="rgba(170,110,100,0.45)"/><rect x="805.62" y="415" width="6.5" height="67" fill="#5b4782"/><rect x="806.42" y="415" width="4.90" height="1.6" fill="#64468a"/><rect x="805.62" y="416" width="0.9" height="66" fill="rgba(150,80,130,0.35)"/><rect x="811.22" y="416" width="0.9" height="66" fill="rgba(170,110,100,0.45)"/><rect x="815.07" y="415" width="6.5" height="67" fill="#5b4782"/><rect x="815.87" y="415" width="4.90" height="1.6" fill="#64468a"/><rect x="815.07" y="416" width="0.9" height="66" fill="rgba(150,80,130,0.35)"/><rect x="815.07" y="416" width="0.9" height="66" fill="rgba(170,110,100,0.45)"/><rect x="824.52" y="415" width="6.5" height="67" fill="#5b4782"/><rect x="825.32" y="415" width="4.90" height="1.6" fill="#64468a"/><rect x="824.52" y="416" width="0.9" height="66" fill="rgba(150,80,130,0.35)"/><rect x="830.12" y="416" width="0.9" height="66" fill="rgba(170,110,100,0.45)"/><rect x="833.97" y="415" width="6.5" height="67" fill="#5b4782"/><rect x="834.77" y="415" width="4.90" height="1.6" fill="#64468a"/><rect x="833.97" y="416" width="0.9" height="66" fill="rgba(150,80,130,0.35)"/><rect x="839.57" y="416" width="0.9" height="66" fill="rgba(170,110,100,0.45)"/><rect x="843.42" y="415" width="6.5" height="67" fill="#5b4782"/><rect x="844.22" y="415" width="4.90" height="1.6" fill="#64468a"/><rect x="843.42" y="416" width="0.9" height="66" fill="rgba(150,80,130,0.35)"/><rect x="849.02" y="416" width="0.9" height="66" fill="rgba(170,110,100,0.45)"/><rect x="852.87" y="415" width="6.5" height="67" fill="#5b4782"/><rect x="853.67" y="415" width="4.90" height="1.6" fill="#64468a"/><rect x="852.87" y="416" width="0.9" height="66" fill="rgba(150,80,130,0.35)"/><rect x="862.32" y="415" width="6.5" height="67" fill="#5b4782"/><rect x="863.12" y="415" width="4.90" height="1.6" fill="#64468a"/><rect x="862.32" y="416" width="0.9" height="66" fill="rgba(150,80,130,0.35)"/><rect x="867.92" y="416" width="0.9" height="66" fill="rgba(170,110,100,0.45)"/><rect x="871.77" y="415" width="6.5" height="67" fill="#5b4782"/><rect x="872.57" y="415" width="4.90" height="1.6" fill="#64468a"/><rect x="871.77" y="416" width="0.9" height="66" fill="rgba(150,80,130,0.35)"/><rect x="877.37" y="416" width="0.9" height="66" fill="rgba(170,110,100,0.45)"/><rect x="881.22" y="415" width="6.5" height="67" fill="#5b4782"/><rect x="882.02" y="415" width="4.90" height="1.6" fill="#64468a"/><rect x="881.22" y="416" width="0.9" height="66" fill="rgba(150,80,130,0.35)"/><rect x="886.82" y="416" width="0.9" height="66" fill="rgba(170,110,100,0.45)"/><rect x="890.67" y="415" width="6.5" height="67" fill="#5b4782"/><rect x="891.47" y="415" width="4.90" height="1.6" fill="#64468a"/><rect x="890.67" y="416" width="0.9" height="66" fill="rgba(150,80,130,0.35)"/><rect x="900.13" y="415" width="6.5" height="67" fill="#5b4782"/><rect x="900.93" y="415" width="4.90" height="1.6" fill="#64468a"/><rect x="900.13" y="416" width="0.9" height="66" fill="rgba(150,80,130,0.35)"/><rect x="905.73" y="416" width="0.9" height="66" fill="rgba(170,110,100,0.45)"/><rect x="909.58" y="415" width="6.5" height="67" fill="#5b4782"/><rect x="910.38" y="415" width="4.90" height="1.6" fill="#64468a"/><rect x="909.58" y="416" width="0.9" height="66" fill="rgba(150,80,130,0.35)"/><rect x="909.58" y="416" width="0.9" height="66" fill="rgba(170,110,100,0.45)"/><rect x="919.03" y="415" width="6.5" height="67" fill="#5b4782"/><rect x="919.83" y="415" width="4.90" height="1.6" fill="#64468a"/><rect x="919.03" y="416" width="0.9" height="66" fill="rgba(150,80,130,0.35)"/><rect x="919.03" y="416" width="0.9" height="66" fill="rgba(170,110,100,0.45)"/><rect x="928.48" y="415" width="6.5" height="67" fill="#5b4782"/><rect x="929.28" y="415" width="4.90" height="1.6" fill="#64468a"/><rect x="928.48" y="416" width="0.9" height="66" fill="rgba(150,80,130,0.35)"/><rect x="937.93" y="415" width="6.5" height="67" fill="#5b4782"/><rect x="938.73" y="415" width="4.90" height="1.6" fill="#64468a"/><rect x="937.93" y="416" width="0.9" height="66" fill="rgba(150,80,130,0.35)"/><rect x="947.38" y="415" width="6.5" height="67" fill="#5b4782"/><rect x="948.18" y="415" width="4.90" height="1.6" fill="#64468a"/><rect x="947.38" y="416" width="0.9" height="66" fill="rgba(150,80,130,0.35)"/><rect x="956.83" y="415" width="6.5" height="67" fill="#5b4782"/><rect x="957.63" y="415" width="4.90" height="1.6" fill="#64468a"/><rect x="956.83" y="416" width="0.9" height="66" fill="rgba(150,80,130,0.35)"/><rect x="962.43" y="416" width="0.9" height="66" fill="rgba(170,110,100,0.45)"/><rect x="966.28" y="415" width="6.5" height="67" fill="#5b4782"/><rect x="967.08" y="415" width="4.90" height="1.6" fill="#64468a"/><rect x="966.28" y="416" width="0.9" height="66" fill="rgba(150,80,130,0.35)"/><rect x="966.28" y="416" width="0.9" height="66" fill="rgba(170,110,100,0.45)"/><rect x="975.73" y="415" width="6.5" height="67" fill="#5b4782"/><rect x="976.53" y="415" width="4.90" height="1.6" fill="#64468a"/><rect x="975.73" y="416" width="0.9" height="66" fill="rgba(150,80,130,0.35)"/><rect x="981.33" y="416" width="0.9" height="66" fill="rgba(170,110,100,0.45)"/><rect x="985.18" y="415" width="6.5" height="67" fill="#5b4782"/><rect x="985.98" y="415" width="4.90" height="1.6" fill="#64468a"/><rect x="985.18" y="416" width="0.9" height="66" fill="rgba(150,80,130,0.35)"/><rect x="994.63" y="415" width="6.5" height="67" fill="#5b4782"/><rect x="995.43" y="415" width="4.90" height="1.6" fill="#64468a"/><rect x="994.63" y="416" width="0.9" height="66" fill="rgba(150,80,130,0.35)"/><rect x="1004.09" y="415" width="6.5" height="67" fill="#5b4782"/><rect x="1004.89" y="415" width="4.90" height="1.6" fill="#64468a"/><rect x="1004.09" y="416" width="0.9" height="66" fill="rgba(150,80,130,0.35)"/><rect x="1009.69" y="416" width="0.9" height="66" fill="rgba(170,110,100,0.45)"/><rect x="1013.54" y="415" width="6.5" height="67" fill="#5b4782"/><rect x="1014.34" y="415" width="4.90" height="1.6" fill="#64468a"/><rect x="1013.54" y="416" width="0.9" height="66" fill="rgba(150,80,130,0.35)"/><rect x="1019.14" y="416" width="0.9" height="66" fill="rgba(170,110,100,0.45)"/><rect x="1022.99" y="415" width="6.5" height="67" fill="#5b4782"/><rect x="1023.79" y="415" width="4.90" height="1.6" fill="#64468a"/><rect x="1022.99" y="416" width="0.9" height="66" fill="rgba(150,80,130,0.35)"/><rect x="1028.59" y="416" width="0.9" height="66" fill="rgba(170,110,100,0.45)"/><rect x="1032.44" y="415" width="6.5" height="67" fill="#5b4782"/><rect x="1033.24" y="415" width="4.90" height="1.6" fill="#64468a"/><rect x="1032.44" y="416" width="0.9" height="66" fill="rgba(150,80,130,0.35)"/><rect x="1038.04" y="416" width="0.9" height="66" fill="rgba(170,110,100,0.45)"/><rect x="1041.89" y="415" width="6.5" height="67" fill="#5b4782"/><rect x="1042.69" y="415" width="4.90" height="1.6" fill="#64468a"/><rect x="1041.89" y="416" width="0.9" height="66" fill="rgba(150,80,130,0.35)"/><rect x="1041.89" y="416" width="0.9" height="66" fill="rgba(170,110,100,0.45)"/><rect x="1051.34" y="415" width="6.5" height="67" fill="#5b4782"/><rect x="1052.14" y="415" width="4.90" height="1.6" fill="#64468a"/><rect x="1051.34" y="416" width="0.9" height="66" fill="rgba(150,80,130,0.35)"/><rect x="1051.34" y="416" width="0.9" height="66" fill="rgba(170,110,100,0.45)"/><rect x="1060.79" y="415" width="6.5" height="67" fill="#5b4782"/><rect x="1061.59" y="415" width="4.90" height="1.6" fill="#64468a"/><rect x="1060.79" y="416" width="0.9" height="66" fill="rgba(150,80,130,0.35)"/><rect x="1066.39" y="416" width="0.9" height="66" fill="rgba(170,110,100,0.45)"/><rect x="1070.24" y="415" width="6.5" height="67" fill="#5b4782"/><rect x="1071.04" y="415" width="4.90" height="1.6" fill="#64468a"/><rect x="1070.24" y="416" width="0.9" height="66" fill="rgba(150,80,130,0.35)"/><rect x="1075.84" y="416" width="0.9" height="66" fill="rgba(170,110,100,0.45)"/><rect x="1079.69" y="415" width="6.5" height="67" fill="#5b4782"/><rect x="1080.49" y="415" width="4.90" height="1.6" fill="#64468a"/><rect x="1079.69" y="416" width="0.9" height="66" fill="rgba(150,80,130,0.35)"/><rect x="1079.69" y="416" width="0.9" height="66" fill="rgba(170,110,100,0.45)"/><rect x="1089.14" y="415" width="6.5" height="67" fill="#5b4782"/><rect x="1089.94" y="415" width="4.90" height="1.6" fill="#64468a"/><rect x="1089.14" y="416" width="0.9" height="66" fill="rgba(150,80,130,0.35)"/><rect x="1094.74" y="416" width="0.9" height="66" fill="rgba(170,110,100,0.45)"/><rect x="1098.59" y="415" width="6.5" height="67" fill="#5b4782"/><rect x="1099.39" y="415" width="4.90" height="1.6" fill="#64468a"/><rect x="1098.59" y="416" width="0.9" height="66" fill="rgba(150,80,130,0.35)"/><rect x="1098.59" y="416" width="0.9" height="66" fill="rgba(170,110,100,0.45)"/><rect x="1108.05" y="415" width="6.5" height="67" fill="#5b4782"/><rect x="1108.85" y="415" width="4.90" height="1.6" fill="#64468a"/><rect x="1108.05" y="416" width="0.9" height="66" fill="rgba(150,80,130,0.35)"/><rect x="1117.50" y="415" width="6.5" height="67" fill="#5b4782"/><rect x="1118.30" y="415" width="4.90" height="1.6" fill="#64468a"/><rect x="1117.50" y="416" width="0.9" height="66" fill="rgba(150,80,130,0.35)"/><rect x="1117.50" y="416" width="0.9" height="66" fill="rgba(170,110,100,0.45)"/><rect x="1126.95" y="415" width="6.5" height="67" fill="#5b4782"/><rect x="1127.75" y="415" width="4.90" height="1.6" fill="#64468a"/><rect x="1126.95" y="416" width="0.9" height="66" fill="rgba(150,80,130,0.35)"/><rect x="1126.95" y="416" width="0.9" height="66" fill="rgba(170,110,100,0.45)"/><rect x="1136.40" y="415" width="6.5" height="67" fill="#5b4782"/><rect x="1137.20" y="415" width="4.90" height="1.6" fill="#64468a"/><rect x="1136.40" y="416" width="0.9" height="66" fill="rgba(150,80,130,0.35)"/><rect x="1136.40" y="416" width="0.9" height="66" fill="rgba(170,110,100,0.45)"/><rect x="1145.85" y="415" width="6.5" height="67" fill="#5b4782"/><rect x="1146.65" y="415" width="4.90" height="1.6" fill="#64468a"/><rect x="1145.85" y="416" width="0.9" height="66" fill="rgba(150,80,130,0.35)"/><rect x="1145.85" y="416" width="0.9" height="66" fill="rgba(170,110,100,0.45)"/><rect x="1155.30" y="415" width="6.5" height="67" fill="#5b4782"/><rect x="1156.10" y="415" width="4.90" height="1.6" fill="#64468a"/><rect x="1155.30" y="416" width="0.9" height="66" fill="rgba(150,80,130,0.35)"/><rect x="1160.90" y="416" width="0.9" height="66" fill="rgba(170,110,100,0.45)"/><rect x="1164.75" y="415" width="6.5" height="67" fill="#5b4782"/><rect x="1165.55" y="415" width="4.90" height="1.6" fill="#64468a"/><rect x="1164.75" y="416" width="0.9" height="66" fill="rgba(150,80,130,0.35)"/><rect x="1174.20" y="415" width="6.5" height="67" fill="#5b4782"/><rect x="1175.00" y="415" width="4.90" height="1.6" fill="#64468a"/><rect x="1174.20" y="416" width="0.9" height="66" fill="rgba(150,80,130,0.35)"/><rect x="1183.65" y="415" width="6.5" height="67" fill="#5b4782"/><rect x="1184.45" y="415" width="4.90" height="1.6" fill="#64468a"/><rect x="1183.65" y="416" width="0.9" height="66" fill="rgba(150,80,130,0.35)"/><rect x="1193.10" y="415" width="6.5" height="67" fill="#5b4782"/><rect x="1193.90" y="415" width="4.90" height="1.6" fill="#64468a"/><rect x="1193.10" y="416" width="0.9" height="66" fill="rgba(150,80,130,0.35)"/><rect x="1202.55" y="415" width="6.5" height="67" fill="#5b4782"/><rect x="1203.35" y="415" width="4.90" height="1.6" fill="#64468a"/><rect x="1202.55" y="416" width="0.9" height="66" fill="rgba(150,80,130,0.35)"/><rect x="1208.15" y="416" width="0.9" height="66" fill="rgba(170,110,100,0.45)"/><rect x="1212.01" y="415" width="6.5" height="67" fill="#5b4782"/><rect x="1212.81" y="415" width="4.90" height="1.6" fill="#64468a"/><rect x="1212.01" y="416" width="0.9" height="66" fill="rgba(150,80,130,0.35)"/><rect x="1217.61" y="416" width="0.9" height="66" fill="rgba(170,110,100,0.45)"/><rect x="1221.46" y="415" width="6.5" height="67" fill="#5b4782"/><rect x="1222.26" y="415" width="4.90" height="1.6" fill="#64468a"/><rect x="1221.46" y="416" width="0.9" height="66" fill="rgba(150,80,130,0.35)"/><rect x="1227.06" y="416" width="0.9" height="66" fill="rgba(170,110,100,0.45)"/><rect x="1230.91" y="415" width="6.5" height="67" fill="#5b4782"/><rect x="1231.71" y="415" width="4.90" height="1.6" fill="#64468a"/><rect x="1230.91" y="416" width="0.9" height="66" fill="rgba(150,80,130,0.35)"/><rect x="1230.91" y="416" width="0.9" height="66" fill="rgba(170,110,100,0.45)"/><rect x="1240.36" y="415" width="6.5" height="67" fill="#5b4782"/><rect x="1241.16" y="415" width="4.90" height="1.6" fill="#64468a"/><rect x="1240.36" y="416" width="0.9" height="66" fill="rgba(150,80,130,0.35)"/><rect x="1245.96" y="416" width="0.9" height="66" fill="rgba(170,110,100,0.45)"/><rect x="1249.81" y="415" width="6.5" height="67" fill="#5b4782"/><rect x="1250.61" y="415" width="4.90" height="1.6" fill="#64468a"/><rect x="1249.81" y="416" width="0.9" height="66" fill="rgba(150,80,130,0.35)"/><rect x="1255.41" y="416" width="0.9" height="66" fill="rgba(170,110,100,0.45)"/><rect x="1259.26" y="415" width="6.5" height="67" fill="#5b4782"/><rect x="1260.06" y="415" width="4.90" height="1.6" fill="#64468a"/><rect x="1259.26" y="416" width="0.9" height="66" fill="rgba(150,80,130,0.35)"/><rect x="1264.86" y="416" width="0.9" height="66" fill="rgba(170,110,100,0.45)"/><rect x="1268.71" y="415" width="6.5" height="67" fill="#5b4782"/><rect x="1269.51" y="415" width="4.90" height="1.6" fill="#64468a"/><rect x="1268.71" y="416" width="0.9" height="66" fill="rgba(150,80,130,0.35)"/><rect x="1274.31" y="416" width="0.9" height="66" fill="rgba(170,110,100,0.45)"/><rect x="1278.16" y="415" width="6.5" height="67" fill="#5b4782"/><rect x="1278.96" y="415" width="4.90" height="1.6" fill="#64468a"/><rect x="1278.16" y="416" width="0.9" height="66" fill="rgba(150,80,130,0.35)"/><rect x="1283.76" y="416" width="0.9" height="66" fill="rgba(170,110,100,0.45)"/><rect x="1287.61" y="415" width="6.5" height="67" fill="#5b4782"/><rect x="1288.41" y="415" width="4.90" height="1.6" fill="#64468a"/><rect x="1287.61" y="416" width="0.9" height="66" fill="rgba(150,80,130,0.35)"/><rect x="1293.21" y="416" width="0.9" height="66" fill="rgba(170,110,100,0.45)"/><rect x="1297.06" y="415" width="6.5" height="67" fill="#5b4782"/><rect x="1297.86" y="415" width="4.90" height="1.6" fill="#64468a"/><rect x="1297.06" y="416" width="0.9" height="66" fill="rgba(150,80,130,0.35)"/><rect x="1302.66" y="416" width="0.9" height="66" fill="rgba(170,110,100,0.45)"/><rect x="1306.51" y="415" width="6.5" height="67" fill="#5b4782"/><rect x="1307.31" y="415" width="4.90" height="1.6" fill="#64468a"/><rect x="1306.51" y="416" width="0.9" height="66" fill="rgba(150,80,130,0.35)"/><rect x="1312.11" y="416" width="0.9" height="66" fill="rgba(170,110,100,0.45)"/><rect x="1315.97" y="415" width="6.5" height="67" fill="#5b4782"/><rect x="1316.77" y="415" width="4.90" height="1.6" fill="#64468a"/><rect x="1315.97" y="416" width="0.9" height="66" fill="rgba(150,80,130,0.35)"/><rect x="1321.57" y="416" width="0.9" height="66" fill="rgba(170,110,100,0.45)"/><rect x="1325.42" y="415" width="6.5" height="67" fill="#5b4782"/><rect x="1326.22" y="415" width="4.90" height="1.6" fill="#64468a"/><rect x="1325.42" y="416" width="0.9" height="66" fill="rgba(150,80,130,0.35)"/><rect x="1331.02" y="416" width="0.9" height="66" fill="rgba(170,110,100,0.45)"/><rect x="1334.87" y="415" width="6.5" height="67" fill="#5b4782"/><rect x="1335.67" y="415" width="4.90" height="1.6" fill="#64468a"/><rect x="1334.87" y="416" width="0.9" height="66" fill="rgba(150,80,130,0.35)"/><rect x="1340.47" y="416" width="0.9" height="66" fill="rgba(170,110,100,0.45)"/><rect x="1344.32" y="415" width="6.5" height="67" fill="#5b4782"/><rect x="1345.12" y="415" width="4.90" height="1.6" fill="#64468a"/><rect x="1344.32" y="416" width="0.9" height="66" fill="rgba(150,80,130,0.35)"/><rect x="1353.77" y="415" width="6.5" height="67" fill="#5b4782"/><rect x="1354.57" y="415" width="4.90" height="1.6" fill="#64468a"/><rect x="1353.77" y="416" width="0.9" height="66" fill="rgba(150,80,130,0.35)"/><rect x="1353.77" y="416" width="0.9" height="66" fill="rgba(170,110,100,0.45)"/><rect x="1363.22" y="415" width="6.5" height="67" fill="#5b4782"/><rect x="1364.02" y="415" width="4.90" height="1.6" fill="#64468a"/><rect x="1363.22" y="416" width="0.9" height="66" fill="rgba(150,80,130,0.35)"/><rect x="1368.82" y="416" width="0.9" height="66" fill="rgba(170,110,100,0.45)"/><rect x="1372.67" y="415" width="6.5" height="67" fill="#5b4782"/><rect x="1373.47" y="415" width="4.90" height="1.6" fill="#64468a"/><rect x="1372.67" y="416" width="0.9" height="66" fill="rgba(150,80,130,0.35)"/><rect x="1378.27" y="416" width="0.9" height="66" fill="rgba(170,110,100,0.45)"/><rect x="1382.12" y="415" width="6.5" height="67" fill="#5b4782"/><rect x="1382.92" y="415" width="4.90" height="1.6" fill="#64468a"/><rect x="1382.12" y="416" width="0.9" height="66" fill="rgba(150,80,130,0.35)"/><rect x="1387.72" y="416" width="0.9" height="66" fill="rgba(170,110,100,0.45)"/><rect x="1391.57" y="415" width="6.5" height="67" fill="#5b4782"/><rect x="1392.37" y="415" width="4.90" height="1.6" fill="#64468a"/><rect x="1391.57" y="416" width="0.9" height="66" fill="rgba(150,80,130,0.35)"/><rect x="1397.17" y="416" width="0.9" height="66" fill="rgba(170,110,100,0.45)"/><rect x="1401.02" y="415" width="6.5" height="67" fill="#5b4782"/><rect x="1401.82" y="415" width="4.90" height="1.6" fill="#64468a"/><rect x="1401.02" y="416" width="0.9" height="66" fill="rgba(150,80,130,0.35)"/><rect x="1406.62" y="416" width="0.9" height="66" fill="rgba(170,110,100,0.45)"/><rect x="1410.47" y="415" width="6.5" height="67" fill="#5b4782"/><rect x="1411.27" y="415" width="4.90" height="1.6" fill="#64468a"/><rect x="1410.47" y="416" width="0.9" height="66" fill="rgba(150,80,130,0.35)"/><rect x="1419.93" y="415" width="6.5" height="67" fill="#5b4782"/><rect x="1420.73" y="415" width="4.90" height="1.6" fill="#64468a"/><rect x="1419.93" y="416" width="0.9" height="66" fill="rgba(150,80,130,0.35)"/><rect x="1429.38" y="415" width="6.5" height="67" fill="#5b4782"/><rect x="1430.18" y="415" width="4.90" height="1.6" fill="#64468a"/><rect x="1429.38" y="416" width="0.9" height="66" fill="rgba(150,80,130,0.35)"/><rect x="1429.38" y="416" width="0.9" height="66" fill="rgba(170,110,100,0.45)"/><rect x="1438.83" y="415" width="6.5" height="67" fill="#5b4782"/><rect x="1439.63" y="415" width="4.90" height="1.6" fill="#64468a"/><rect x="1438.83" y="416" width="0.9" height="66" fill="rgba(150,80,130,0.35)"/><rect x="1438.83" y="416" width="0.9" height="66" fill="rgba(170,110,100,0.45)"/><rect x="1448.28" y="415" width="6.5" height="67" fill="#5b4782"/><rect x="1449.08" y="415" width="4.90" height="1.6" fill="#64468a"/><rect x="1448.28" y="416" width="0.9" height="66" fill="rgba(150,80,130,0.35)"/><rect x="1453.88" y="416" width="0.9" height="66" fill="rgba(170,110,100,0.45)"/><rect x="1457.73" y="415" width="6.5" height="67" fill="#5b4782"/><rect x="1458.53" y="415" width="4.90" height="1.6" fill="#64468a"/><rect x="1457.73" y="416" width="0.9" height="66" fill="rgba(150,80,130,0.35)"/><rect x="1463.33" y="416" width="0.9" height="66" fill="rgba(170,110,100,0.45)"/><rect x="1467.18" y="415" width="6.5" height="67" fill="#5b4782"/><rect x="1467.98" y="415" width="4.90" height="1.6" fill="#64468a"/><rect x="1467.18" y="416" width="0.9" height="66" fill="rgba(150,80,130,0.35)"/><rect x="1472.78" y="416" width="0.9" height="66" fill="rgba(170,110,100,0.45)"/><rect x="1476.63" y="415" width="6.5" height="67" fill="#5b4782"/><rect x="1477.43" y="415" width="4.90" height="1.6" fill="#64468a"/><rect x="1476.63" y="416" width="0.9" height="66" fill="rgba(150,80,130,0.35)"/><rect x="1482.23" y="416" width="0.9" height="66" fill="rgba(170,110,100,0.45)"/><rect x="1486.08" y="415" width="6.5" height="67" fill="#5b4782"/><rect x="1486.88" y="415" width="4.90" height="1.6" fill="#64468a"/><rect x="1486.08" y="416" width="0.9" height="66" fill="rgba(150,80,130,0.35)"/><rect x="1495.53" y="415" width="6.5" height="67" fill="#5b4782"/><rect x="1496.33" y="415" width="4.90" height="1.6" fill="#64468a"/><rect x="1495.53" y="416" width="0.9" height="66" fill="rgba(150,80,130,0.35)"/><rect x="1501.13" y="416" width="0.9" height="66" fill="rgba(170,110,100,0.45)"/><rect x="1504.98" y="415" width="6.5" height="67" fill="#5b4782"/><rect x="1505.78" y="415" width="4.90" height="1.6" fill="#64468a"/><rect x="1504.98" y="416" width="0.9" height="66" fill="rgba(150,80,130,0.35)"/><rect x="1510.58" y="416" width="0.9" height="66" fill="rgba(170,110,100,0.45)"/><rect x="1514.43" y="415" width="6.5" height="67" fill="#5b4782"/><rect x="1515.23" y="415" width="4.90" height="1.6" fill="#64468a"/><rect x="1514.43" y="416" width="0.9" height="66" fill="rgba(150,80,130,0.35)"/><rect x="1523.89" y="415" width="6.5" height="67" fill="#5b4782"/><rect x="1524.69" y="415" width="4.90" height="1.6" fill="#64468a"/><rect x="1523.89" y="416" width="0.9" height="66" fill="rgba(150,80,130,0.35)"/><rect x="1523.89" y="416" width="0.9" height="66" fill="rgba(170,110,100,0.45)"/><rect x="1533.34" y="415" width="6.5" height="67" fill="#5b4782"/><rect x="1534.14" y="415" width="4.90" height="1.6" fill="#64468a"/><rect x="1533.34" y="416" width="0.9" height="66" fill="rgba(150,80,130,0.35)"/><rect x="1538.94" y="416" width="0.9" height="66" fill="rgba(170,110,100,0.45)"/><rect x="1542.79" y="415" width="6.5" height="67" fill="#5b4782"/><rect x="1543.59" y="415" width="4.90" height="1.6" fill="#64468a"/><rect x="1542.79" y="416" width="0.9" height="66" fill="rgba(150,80,130,0.35)"/><rect x="1542.79" y="416" width="0.9" height="66" fill="rgba(170,110,100,0.45)"/><rect x="1552.24" y="415" width="6.5" height="67" fill="#5b4782"/><rect x="1553.04" y="415" width="4.90" height="1.6" fill="#64468a"/><rect x="1552.24" y="416" width="0.9" height="66" fill="rgba(150,80,130,0.35)"/><rect x="1557.84" y="416" width="0.9" height="66" fill="rgba(170,110,100,0.45)"/><rect x="1561.69" y="415" width="6.5" height="67" fill="#5b4782"/><rect x="1562.49" y="415" width="4.90" height="1.6" fill="#64468a"/><rect x="1561.69" y="416" width="0.9" height="66" fill="rgba(150,80,130,0.35)"/><rect x="1561.69" y="416" width="0.9" height="66" fill="rgba(170,110,100,0.45)"/><rect x="1571.14" y="415" width="6.5" height="67" fill="#5b4782"/><rect x="1571.94" y="415" width="4.90" height="1.6" fill="#64468a"/><rect x="1571.14" y="416" width="0.9" height="66" fill="rgba(150,80,130,0.35)"/><rect x="1580.59" y="415" width="6.5" height="67" fill="#5b4782"/><rect x="1581.39" y="415" width="4.90" height="1.6" fill="#64468a"/><rect x="1580.59" y="416" width="0.9" height="66" fill="rgba(150,80,130,0.35)"/><rect x="1590.04" y="415" width="6.5" height="67" fill="#5b4782"/><rect x="1590.84" y="415" width="4.90" height="1.6" fill="#64468a"/><rect x="1590.04" y="416" width="0.9" height="66" fill="rgba(150,80,130,0.35)"/><rect x="1590.04" y="416" width="0.9" height="66" fill="rgba(170,110,100,0.45)"/><rect x="1599.49" y="415" width="6.5" height="67" fill="#5b4782"/><rect x="1600.29" y="415" width="4.90" height="1.6" fill="#64468a"/><rect x="1599.49" y="416" width="0.9" height="66" fill="rgba(150,80,130,0.35)"/><rect x="1605.09" y="416" width="0.9" height="66" fill="rgba(170,110,100,0.45)"/><rect x="1608.94" y="415" width="6.5" height="67" fill="#5b4782"/><rect x="1609.74" y="415" width="4.90" height="1.6" fill="#64468a"/><rect x="1608.94" y="416" width="0.9" height="66" fill="rgba(150,80,130,0.35)"/><rect x="1614.54" y="416" width="0.9" height="66" fill="rgba(170,110,100,0.45)"/><rect x="1618.39" y="415" width="6.5" height="67" fill="#5b4782"/><rect x="1619.19" y="415" width="4.90" height="1.6" fill="#64468a"/><rect x="1618.39" y="416" width="0.9" height="66" fill="rgba(150,80,130,0.35)"/><rect x="1623.99" y="416" width="0.9" height="66" fill="rgba(170,110,100,0.45)"/><rect x="1627.84" y="415" width="6.5" height="67" fill="#5b4782"/><rect x="1628.64" y="415" width="4.90" height="1.6" fill="#64468a"/><rect x="1627.84" y="416" width="0.9" height="66" fill="rgba(150,80,130,0.35)"/><rect x="1637.30" y="415" width="6.5" height="67" fill="#5b4782"/><rect x="1638.10" y="415" width="4.90" height="1.6" fill="#64468a"/><rect x="1637.30" y="416" width="0.9" height="66" fill="rgba(150,80,130,0.35)"/><rect x="1637.30" y="416" width="0.9" height="66" fill="rgba(170,110,100,0.45)"/><rect x="1646.75" y="415" width="6.5" height="67" fill="#5b4782"/><rect x="1647.55" y="415" width="4.90" height="1.6" fill="#64468a"/><rect x="1646.75" y="416" width="0.9" height="66" fill="rgba(150,80,130,0.35)"/><rect x="1656.20" y="415" width="6.5" height="67" fill="#5b4782"/><rect x="1657.00" y="415" width="4.90" height="1.6" fill="#64468a"/><rect x="1656.20" y="416" width="0.9" height="66" fill="rgba(150,80,130,0.35)"/><rect x="1661.80" y="416" width="0.9" height="66" fill="rgba(170,110,100,0.45)"/><rect x="1665.65" y="415" width="6.5" height="67" fill="#5b4782"/><rect x="1666.45" y="415" width="4.90" height="1.6" fill="#64468a"/><rect x="1665.65" y="416" width="0.9" height="66" fill="rgba(150,80,130,0.35)"/><rect x="1671.25" y="416" width="0.9" height="66" fill="rgba(170,110,100,0.45)"/><rect x="1675.10" y="415" width="6.5" height="67" fill="#5b4782"/><rect x="1675.90" y="415" width="4.90" height="1.6" fill="#64468a"/><rect x="1675.10" y="416" width="0.9" height="66" fill="rgba(150,80,130,0.35)"/><rect x="1684.55" y="415" width="6.5" height="67" fill="#5b4782"/><rect x="1685.35" y="415" width="4.90" height="1.6" fill="#64468a"/><rect x="1684.55" y="416" width="0.9" height="66" fill="rgba(150,80,130,0.35)"/><rect x="1694.00" y="415" width="6.5" height="67" fill="#5b4782"/><rect x="1694.80" y="415" width="4.90" height="1.6" fill="#64468a"/><rect x="1694.00" y="416" width="0.9" height="66" fill="rgba(150,80,130,0.35)"/><rect x="1703.45" y="415" width="6.5" height="67" fill="#5b4782"/><rect x="1704.25" y="415" width="4.90" height="1.6" fill="#64468a"/><rect x="1703.45" y="416" width="0.9" height="66" fill="rgba(150,80,130,0.35)"/><rect x="1712.90" y="415" width="6.5" height="67" fill="#5b4782"/><rect x="1713.70" y="415" width="4.90" height="1.6" fill="#64468a"/><rect x="1712.90" y="416" width="0.9" height="66" fill="rgba(150,80,130,0.35)"/><rect x="1722.35" y="415" width="6.5" height="67" fill="#5b4782"/><rect x="1723.15" y="415" width="4.90" height="1.6" fill="#64468a"/><rect x="1722.35" y="416" width="0.9" height="66" fill="rgba(150,80,130,0.35)"/><rect x="1731.80" y="415" width="6.5" height="67" fill="#5b4782"/><rect x="1732.60" y="415" width="4.90" height="1.6" fill="#64468a"/><rect x="1731.80" y="416" width="0.9" height="66" fill="rgba(150,80,130,0.35)"/><rect x="1737.40" y="416" width="0.9" height="66" fill="rgba(170,110,100,0.45)"/><rect x="1741.26" y="415" width="6.5" height="67" fill="#5b4782"/><rect x="1742.06" y="415" width="4.90" height="1.6" fill="#64468a"/><rect x="1741.26" y="416" width="0.9" height="66" fill="rgba(150,80,130,0.35)"/><rect x="1741.26" y="416" width="0.9" height="66" fill="rgba(170,110,100,0.45)"/><rect x="1750.71" y="415" width="6.5" height="67" fill="#5b4782"/><rect x="1751.51" y="415" width="4.90" height="1.6" fill="#64468a"/><rect x="1750.71" y="416" width="0.9" height="66" fill="rgba(150,80,130,0.35)"/><rect x="1756.31" y="416" width="0.9" height="66" fill="rgba(170,110,100,0.45)"/><rect x="1760.16" y="415" width="6.5" height="67" fill="#5b4782"/><rect x="1760.96" y="415" width="4.90" height="1.6" fill="#64468a"/><rect x="1760.16" y="416" width="0.9" height="66" fill="rgba(150,80,130,0.35)"/><rect x="1765.76" y="416" width="0.9" height="66" fill="rgba(170,110,100,0.45)"/><rect x="1769.61" y="415" width="6.5" height="67" fill="#5b4782"/><rect x="1770.41" y="415" width="4.90" height="1.6" fill="#64468a"/><rect x="1769.61" y="416" width="0.9" height="66" fill="rgba(150,80,130,0.35)"/><rect x="1775.21" y="416" width="0.9" height="66" fill="rgba(170,110,100,0.45)"/><rect x="1779.06" y="415" width="6.5" height="67" fill="#5b4782"/><rect x="1779.86" y="415" width="4.90" height="1.6" fill="#64468a"/><rect x="1779.06" y="416" width="0.9" height="66" fill="rgba(150,80,130,0.35)"/><rect x="1784.66" y="416" width="0.9" height="66" fill="rgba(170,110,100,0.45)"/><rect x="1788.51" y="415" width="6.5" height="67" fill="#5b4782"/><rect x="1789.31" y="415" width="4.90" height="1.6" fill="#64468a"/><rect x="1788.51" y="416" width="0.9" height="66" fill="rgba(150,80,130,0.35)"/><rect x="1794.11" y="416" width="0.9" height="66" fill="rgba(170,110,100,0.45)"/><rect x="1797.96" y="415" width="6.5" height="67" fill="#5b4782"/><rect x="1798.76" y="415" width="4.90" height="1.6" fill="#64468a"/><rect x="1797.96" y="416" width="0.9" height="66" fill="rgba(150,80,130,0.35)"/><rect x="1797.96" y="416" width="0.9" height="66" fill="rgba(170,110,100,0.45)"/><rect x="1807.41" y="415" width="6.5" height="67" fill="#5b4782"/><rect x="1808.21" y="415" width="4.90" height="1.6" fill="#64468a"/><rect x="1807.41" y="416" width="0.9" height="66" fill="rgba(150,80,130,0.35)"/><rect x="1816.86" y="415" width="6.5" height="67" fill="#5b4782"/><rect x="1817.66" y="415" width="4.90" height="1.6" fill="#64468a"/><rect x="1816.86" y="416" width="0.9" height="66" fill="rgba(150,80,130,0.35)"/><rect x="1816.86" y="416" width="0.9" height="66" fill="rgba(170,110,100,0.45)"/><rect x="1826.31" y="415" width="6.5" height="67" fill="#5b4782"/><rect x="1827.11" y="415" width="4.90" height="1.6" fill="#64468a"/><rect x="1826.31" y="416" width="0.9" height="66" fill="rgba(150,80,130,0.35)"/><rect x="1835.76" y="415" width="6.5" height="67" fill="#5b4782"/><rect x="1836.56" y="415" width="4.90" height="1.6" fill="#64468a"/><rect x="1835.76" y="416" width="0.9" height="66" fill="rgba(150,80,130,0.35)"/><rect x="1845.22" y="415" width="6.5" height="67" fill="#5b4782"/><rect x="1846.02" y="415" width="4.90" height="1.6" fill="#64468a"/><rect x="1845.22" y="416" width="0.9" height="66" fill="rgba(150,80,130,0.35)"/><rect x="1854.67" y="415" width="6.5" height="67" fill="#5b4782"/><rect x="1855.47" y="415" width="4.90" height="1.6" fill="#64468a"/><rect x="1854.67" y="416" width="0.9" height="66" fill="rgba(150,80,130,0.35)"/><rect x="1860.27" y="416" width="0.9" height="66" fill="rgba(170,110,100,0.45)"/><rect x="1864.12" y="415" width="6.5" height="67" fill="#5b4782"/><rect x="1864.92" y="415" width="4.90" height="1.6" fill="#64468a"/><rect x="1864.12" y="416" width="0.9" height="66" fill="rgba(150,80,130,0.35)"/><rect x="1869.72" y="416" width="0.9" height="66" fill="rgba(170,110,100,0.45)"/><rect x="1873.57" y="415" width="6.5" height="67" fill="#5b4782"/><rect x="1874.37" y="415" width="4.90" height="1.6" fill="#64468a"/><rect x="1873.57" y="416" width="0.9" height="66" fill="rgba(150,80,130,0.35)"/><rect x="1879.17" y="416" width="0.9" height="66" fill="rgba(170,110,100,0.45)"/><rect x="1883.02" y="415" width="6.5" height="67" fill="#5b4782"/><rect x="1883.82" y="415" width="4.90" height="1.6" fill="#64468a"/><rect x="1883.02" y="416" width="0.9" height="66" fill="rgba(150,80,130,0.35)"/><rect x="1888.62" y="416" width="0.9" height="66" fill="rgba(170,110,100,0.45)"/><rect x="1892.47" y="415" width="6.5" height="67" fill="#5b4782"/><rect x="1893.27" y="415" width="4.90" height="1.6" fill="#64468a"/><rect x="1892.47" y="416" width="0.9" height="66" fill="rgba(150,80,130,0.35)"/><rect x="1898.07" y="416" width="0.9" height="66" fill="rgba(170,110,100,0.45)"/><rect x="1901.92" y="415" width="6.5" height="67" fill="#5b4782"/><rect x="1902.72" y="415" width="4.90" height="1.6" fill="#64468a"/><rect x="1901.92" y="416" width="0.9" height="66" fill="rgba(150,80,130,0.35)"/><rect x="1901.92" y="416" width="0.9" height="66" fill="rgba(170,110,100,0.45)"/><rect x="1911.37" y="415" width="6.5" height="67" fill="#5b4782"/><rect x="1912.17" y="415" width="4.90" height="1.6" fill="#64468a"/><rect x="1911.37" y="416" width="0.9" height="66" fill="rgba(150,80,130,0.35)"/><rect x="1920.82" y="415" width="6.5" height="67" fill="#5b4782"/><rect x="1921.62" y="415" width="4.90" height="1.6" fill="#64468a"/><rect x="1920.82" y="416" width="0.9" height="66" fill="rgba(150,80,130,0.35)"/><rect x="1930.27" y="415" width="6.5" height="67" fill="#5b4782"/><rect x="1931.07" y="415" width="4.90" height="1.6" fill="#64468a"/><rect x="1930.27" y="416" width="0.9" height="66" fill="rgba(150,80,130,0.35)"/><rect x="1930.27" y="416" width="0.9" height="66" fill="rgba(170,110,100,0.45)"/><rect x="1939.72" y="415" width="6.5" height="67" fill="#5b4782"/><rect x="1940.52" y="415" width="4.90" height="1.6" fill="#64468a"/><rect x="1939.72" y="416" width="0.9" height="66" fill="rgba(150,80,130,0.35)"/><rect x="1939.72" y="416" width="0.9" height="66" fill="rgba(170,110,100,0.45)"/><rect x="1949.18" y="415" width="6.5" height="67" fill="#5b4782"/><rect x="1949.98" y="415" width="4.90" height="1.6" fill="#64468a"/><rect x="1949.18" y="416" width="0.9" height="66" fill="rgba(150,80,130,0.35)"/><rect x="1958.63" y="415" width="6.5" height="67" fill="#5b4782"/><rect x="1959.43" y="415" width="4.90" height="1.6" fill="#64468a"/><rect x="1958.63" y="416" width="0.9" height="66" fill="rgba(150,80,130,0.35)"/><rect x="1964.23" y="416" width="0.9" height="66" fill="rgba(170,110,100,0.45)"/><rect x="1968.08" y="415" width="6.5" height="67" fill="#5b4782"/><rect x="1968.88" y="415" width="4.90" height="1.6" fill="#64468a"/><rect x="1968.08" y="416" width="0.9" height="66" fill="rgba(150,80,130,0.35)"/><rect x="1968.08" y="416" width="0.9" height="66" fill="rgba(170,110,100,0.45)"/><rect x="1977.53" y="415" width="6.5" height="67" fill="#5b4782"/><rect x="1978.33" y="415" width="4.90" height="1.6" fill="#64468a"/><rect x="1977.53" y="416" width="0.9" height="66" fill="rgba(150,80,130,0.35)"/><rect x="1986.98" y="415" width="6.5" height="67" fill="#5b4782"/><rect x="1987.78" y="415" width="4.90" height="1.6" fill="#64468a"/><rect x="1986.98" y="416" width="0.9" height="66" fill="rgba(150,80,130,0.35)"/><rect x="1996.43" y="415" width="6.5" height="67" fill="#5b4782"/><rect x="1997.23" y="415" width="4.90" height="1.6" fill="#64468a"/><rect x="1996.43" y="416" width="0.9" height="66" fill="rgba(150,80,130,0.35)"/><rect x="2005.88" y="415" width="6.5" height="67" fill="#5b4782"/><rect x="2006.68" y="415" width="4.90" height="1.6" fill="#64468a"/><rect x="2005.88" y="416" width="0.9" height="66" fill="rgba(150,80,130,0.35)"/><rect x="2005.88" y="416" width="0.9" height="66" fill="rgba(170,110,100,0.45)"/><rect x="2015.33" y="415" width="6.5" height="67" fill="#5b4782"/><rect x="2016.13" y="415" width="4.90" height="1.6" fill="#64468a"/><rect x="2015.33" y="416" width="0.9" height="66" fill="rgba(150,80,130,0.35)"/><rect x="2020.93" y="416" width="0.9" height="66" fill="rgba(170,110,100,0.45)"/><rect x="2024.78" y="415" width="6.5" height="67" fill="#5b4782"/><rect x="2025.58" y="415" width="4.90" height="1.6" fill="#64468a"/><rect x="2024.78" y="416" width="0.9" height="66" fill="rgba(150,80,130,0.35)"/><rect x="2034.23" y="415" width="6.5" height="67" fill="#5b4782"/><rect x="2035.03" y="415" width="4.90" height="1.6" fill="#64468a"/><rect x="2034.23" y="416" width="0.9" height="66" fill="rgba(150,80,130,0.35)"/><rect x="2039.83" y="416" width="0.9" height="66" fill="rgba(170,110,100,0.45)"/><rect x="2043.68" y="415" width="6.5" height="67" fill="#5b4782"/><rect x="2044.48" y="415" width="4.90" height="1.6" fill="#64468a"/><rect x="2043.68" y="416" width="0.9" height="66" fill="rgba(150,80,130,0.35)"/><rect x="2053.14" y="415" width="6.5" height="67" fill="#5b4782"/><rect x="2053.94" y="415" width="4.90" height="1.6" fill="#64468a"/><rect x="2053.14" y="416" width="0.9" height="66" fill="rgba(150,80,130,0.35)"/><rect x="2062.59" y="415" width="6.5" height="67" fill="#5b4782"/><rect x="2063.39" y="415" width="4.90" height="1.6" fill="#64468a"/><rect x="2062.59" y="416" width="0.9" height="66" fill="rgba(150,80,130,0.35)"/><rect x="2068.19" y="416" width="0.9" height="66" fill="rgba(170,110,100,0.45)"/><rect x="2072.04" y="415" width="6.5" height="67" fill="#5b4782"/><rect x="2072.84" y="415" width="4.90" height="1.6" fill="#64468a"/><rect x="2072.04" y="416" width="0.9" height="66" fill="rgba(150,80,130,0.35)"/><rect x="2072.04" y="416" width="0.9" height="66" fill="rgba(170,110,100,0.45)"/><rect x="2081.49" y="415" width="6.5" height="67" fill="#5b4782"/><rect x="2082.29" y="415" width="4.90" height="1.6" fill="#64468a"/><rect x="2081.49" y="416" width="0.9" height="66" fill="rgba(150,80,130,0.35)"/><rect x="2090.94" y="415" width="6.5" height="67" fill="#5b4782"/><rect x="2091.74" y="415" width="4.90" height="1.6" fill="#64468a"/><rect x="2090.94" y="416" width="0.9" height="66" fill="rgba(150,80,130,0.35)"/><rect x="2100.39" y="415" width="6.5" height="67" fill="#5b4782"/><rect x="2101.19" y="415" width="4.90" height="1.6" fill="#64468a"/><rect x="2100.39" y="416" width="0.9" height="66" fill="rgba(150,80,130,0.35)"/><rect x="2105.99" y="416" width="0.9" height="66" fill="rgba(170,110,100,0.45)"/><rect x="2109.84" y="415" width="6.5" height="67" fill="#5b4782"/><rect x="2110.64" y="415" width="4.90" height="1.6" fill="#64468a"/><rect x="2109.84" y="416" width="0.9" height="66" fill="rgba(150,80,130,0.35)"/><rect x="2115.44" y="416" width="0.9" height="66" fill="rgba(170,110,100,0.45)"/><rect x="2119.29" y="415" width="6.5" height="67" fill="#5b4782"/><rect x="2120.09" y="415" width="4.90" height="1.6" fill="#64468a"/><rect x="2119.29" y="416" width="0.9" height="66" fill="rgba(150,80,130,0.35)"/><rect x="2124.89" y="416" width="0.9" height="66" fill="rgba(170,110,100,0.45)"/><rect x="2128.74" y="415" width="6.5" height="67" fill="#5b4782"/><rect x="2129.54" y="415" width="4.90" height="1.6" fill="#64468a"/><rect x="2128.74" y="416" width="0.9" height="66" fill="rgba(150,80,130,0.35)"/><rect x="2138.19" y="415" width="6.5" height="67" fill="#5b4782"/><rect x="2138.99" y="415" width="4.90" height="1.6" fill="#64468a"/><rect x="2138.19" y="416" width="0.9" height="66" fill="rgba(150,80,130,0.35)"/><rect x="2147.64" y="415" width="6.5" height="67" fill="#5b4782"/><rect x="2148.44" y="415" width="4.90" height="1.6" fill="#64468a"/><rect x="2147.64" y="416" width="0.9" height="66" fill="rgba(150,80,130,0.35)"/><rect x="2153.24" y="416" width="0.9" height="66" fill="rgba(170,110,100,0.45)"/><rect x="2157.10" y="415" width="6.5" height="67" fill="#5b4782"/><rect x="2157.90" y="415" width="4.90" height="1.6" fill="#64468a"/><rect x="2157.10" y="416" width="0.9" height="66" fill="rgba(150,80,130,0.35)"/><rect x="2166.55" y="415" width="6.5" height="67" fill="#5b4782"/><rect x="2167.35" y="415" width="4.90" height="1.6" fill="#64468a"/><rect x="2166.55" y="416" width="0.9" height="66" fill="rgba(150,80,130,0.35)"/><rect x="2176.00" y="415" width="6.5" height="67" fill="#5b4782"/><rect x="2176.80" y="415" width="4.90" height="1.6" fill="#64468a"/><rect x="2176.00" y="416" width="0.9" height="66" fill="rgba(150,80,130,0.35)"/><rect x="2176.00" y="416" width="0.9" height="66" fill="rgba(170,110,100,0.45)"/><rect x="2185.45" y="415" width="6.5" height="67" fill="#5b4782"/><rect x="2186.25" y="415" width="4.90" height="1.6" fill="#64468a"/><rect x="2185.45" y="416" width="0.9" height="66" fill="rgba(150,80,130,0.35)"/><rect x="2191.05" y="416" width="0.9" height="66" fill="rgba(170,110,100,0.45)"/><rect x="2194.90" y="415" width="6.5" height="67" fill="#5b4782"/><rect x="2195.70" y="415" width="4.90" height="1.6" fill="#64468a"/><rect x="2194.90" y="416" width="0.9" height="66" fill="rgba(150,80,130,0.35)"/><rect x="2194.90" y="416" width="0.9" height="66" fill="rgba(170,110,100,0.45)"/><rect x="2204.35" y="415" width="6.5" height="67" fill="#5b4782"/><rect x="2205.15" y="415" width="4.90" height="1.6" fill="#64468a"/><rect x="2204.35" y="416" width="0.9" height="66" fill="rgba(150,80,130,0.35)"/><rect x="2209.95" y="416" width="0.9" height="66" fill="rgba(170,110,100,0.45)"/><rect x="2213.80" y="415" width="6.5" height="67" fill="#5b4782"/><rect x="2214.60" y="415" width="4.90" height="1.6" fill="#64468a"/><rect x="2213.80" y="416" width="0.9" height="66" fill="rgba(150,80,130,0.35)"/><rect x="2219.40" y="416" width="0.9" height="66" fill="rgba(170,110,100,0.45)"/><rect x="2223.25" y="415" width="6.5" height="67" fill="#5b4782"/><rect x="2224.05" y="415" width="4.90" height="1.6" fill="#64468a"/><rect x="2223.25" y="416" width="0.9" height="66" fill="rgba(150,80,130,0.35)"/><rect x="2232.70" y="415" width="6.5" height="67" fill="#5b4782"/><rect x="2233.50" y="415" width="4.90" height="1.6" fill="#64468a"/><rect x="2232.70" y="416" width="0.9" height="66" fill="rgba(150,80,130,0.35)"/><rect x="2232.70" y="416" width="0.9" height="66" fill="rgba(170,110,100,0.45)"/><rect x="2242.15" y="415" width="6.5" height="67" fill="#5b4782"/><rect x="2242.95" y="415" width="4.90" height="1.6" fill="#64468a"/><rect x="2242.15" y="416" width="0.9" height="66" fill="rgba(150,80,130,0.35)"/><rect x="2242.15" y="416" width="0.9" height="66" fill="rgba(170,110,100,0.45)"/><rect x="2251.60" y="415" width="6.5" height="67" fill="#5b4782"/><rect x="2252.40" y="415" width="4.90" height="1.6" fill="#64468a"/><rect x="2251.60" y="416" width="0.9" height="66" fill="rgba(150,80,130,0.35)"/><rect x="2261.06" y="415" width="6.5" height="67" fill="#5b4782"/><rect x="2261.86" y="415" width="4.90" height="1.6" fill="#64468a"/><rect x="2261.06" y="416" width="0.9" height="66" fill="rgba(150,80,130,0.35)"/><rect x="2261.06" y="416" width="0.9" height="66" fill="rgba(170,110,100,0.45)"/><rect x="2270.51" y="415" width="6.5" height="67" fill="#5b4782"/><rect x="2271.31" y="415" width="4.90" height="1.6" fill="#64468a"/><rect x="2270.51" y="416" width="0.9" height="66" fill="rgba(150,80,130,0.35)"/><rect x="2279.96" y="415" width="6.5" height="67" fill="#5b4782"/><rect x="2280.76" y="415" width="4.90" height="1.6" fill="#64468a"/><rect x="2279.96" y="416" width="0.9" height="66" fill="rgba(150,80,130,0.35)"/><rect x="2289.41" y="415" width="6.5" height="67" fill="#5b4782"/><rect x="2290.21" y="415" width="4.90" height="1.6" fill="#64468a"/><rect x="2289.41" y="416" width="0.9" height="66" fill="rgba(150,80,130,0.35)"/><rect x="2295.01" y="416" width="0.9" height="66" fill="rgba(170,110,100,0.45)"/><rect x="2298.86" y="415" width="6.5" height="67" fill="#5b4782"/><rect x="2299.66" y="415" width="4.90" height="1.6" fill="#64468a"/><rect x="2298.86" y="416" width="0.9" height="66" fill="rgba(150,80,130,0.35)"/><rect x="2304.46" y="416" width="0.9" height="66" fill="rgba(170,110,100,0.45)"/><rect x="2308.31" y="415" width="6.5" height="67" fill="#5b4782"/><rect x="2309.11" y="415" width="4.90" height="1.6" fill="#64468a"/><rect x="2308.31" y="416" width="0.9" height="66" fill="rgba(150,80,130,0.35)"/><rect x="2313.91" y="416" width="0.9" height="66" fill="rgba(170,110,100,0.45)"/><rect x="2317.76" y="415" width="6.5" height="67" fill="#5b4782"/><rect x="2318.56" y="415" width="4.90" height="1.6" fill="#64468a"/><rect x="2317.76" y="416" width="0.9" height="66" fill="rgba(150,80,130,0.35)"/><rect x="2323.36" y="416" width="0.9" height="66" fill="rgba(170,110,100,0.45)"/><rect x="2327.21" y="415" width="6.5" height="67" fill="#5b4782"/><rect x="2328.01" y="415" width="4.90" height="1.6" fill="#64468a"/><rect x="2327.21" y="416" width="0.9" height="66" fill="rgba(150,80,130,0.35)"/><rect x="2327.21" y="416" width="0.9" height="66" fill="rgba(170,110,100,0.45)"/><rect x="2336.66" y="415" width="6.5" height="67" fill="#5b4782"/><rect x="2337.46" y="415" width="4.90" height="1.6" fill="#64468a"/><rect x="2336.66" y="416" width="0.9" height="66" fill="rgba(150,80,130,0.35)"/><rect x="2342.26" y="416" width="0.9" height="66" fill="rgba(170,110,100,0.45)"/><rect x="2346.11" y="415" width="6.5" height="67" fill="#5b4782"/><rect x="2346.91" y="415" width="4.90" height="1.6" fill="#64468a"/><rect x="2346.11" y="416" width="0.9" height="66" fill="rgba(150,80,130,0.35)"/><rect x="2346.11" y="416" width="0.9" height="66" fill="rgba(170,110,100,0.45)"/><rect x="2355.56" y="415" width="6.5" height="67" fill="#5b4782"/><rect x="2356.36" y="415" width="4.90" height="1.6" fill="#64468a"/><rect x="2355.56" y="416" width="0.9" height="66" fill="rgba(150,80,130,0.35)"/><rect x="2361.16" y="416" width="0.9" height="66" fill="rgba(170,110,100,0.45)"/><rect x="2365.02" y="415" width="6.5" height="67" fill="#5b4782"/><rect x="2365.82" y="415" width="4.90" height="1.6" fill="#64468a"/><rect x="2365.02" y="416" width="0.9" height="66" fill="rgba(150,80,130,0.35)"/><rect x="2374.47" y="415" width="6.5" height="67" fill="#5b4782"/><rect x="2375.27" y="415" width="4.90" height="1.6" fill="#64468a"/><rect x="2374.47" y="416" width="0.9" height="66" fill="rgba(150,80,130,0.35)"/><rect x="2380.07" y="416" width="0.9" height="66" fill="rgba(170,110,100,0.45)"/><rect x="2383.92" y="415" width="6.5" height="67" fill="#5b4782"/><rect x="2384.72" y="415" width="4.90" height="1.6" fill="#64468a"/><rect x="2383.92" y="416" width="0.9" height="66" fill="rgba(150,80,130,0.35)"/><rect x="2383.92" y="416" width="0.9" height="66" fill="rgba(170,110,100,0.45)"/><rect x="2393.37" y="415" width="6.5" height="67" fill="#5b4782"/><rect x="2394.17" y="415" width="4.90" height="1.6" fill="#64468a"/><rect x="2393.37" y="416" width="0.9" height="66" fill="rgba(150,80,130,0.35)"/><rect x="2393.37" y="416" width="0.9" height="66" fill="rgba(170,110,100,0.45)"/><rect x="2402.82" y="415" width="6.5" height="67" fill="#5b4782"/><rect x="2403.62" y="415" width="4.90" height="1.6" fill="#64468a"/><rect x="2402.82" y="416" width="0.9" height="66" fill="rgba(150,80,130,0.35)"/><rect x="2412.27" y="415" width="6.5" height="67" fill="#5b4782"/><rect x="2413.07" y="415" width="4.90" height="1.6" fill="#64468a"/><rect x="2412.27" y="416" width="0.9" height="66" fill="rgba(150,80,130,0.35)"/><rect x="2412.27" y="416" width="0.9" height="66" fill="rgba(170,110,100,0.45)"/><rect x="2421.72" y="415" width="6.5" height="67" fill="#5b4782"/><rect x="2422.52" y="415" width="4.90" height="1.6" fill="#64468a"/><rect x="2421.72" y="416" width="0.9" height="66" fill="rgba(150,80,130,0.35)"/><rect x="2431.17" y="415" width="6.5" height="67" fill="#5b4782"/><rect x="2431.97" y="415" width="4.90" height="1.6" fill="#64468a"/><rect x="2431.17" y="416" width="0.9" height="66" fill="rgba(150,80,130,0.35)"/><rect x="2431.17" y="416" width="0.9" height="66" fill="rgba(170,110,100,0.45)"/><rect x="2440.62" y="415" width="6.5" height="67" fill="#5b4782"/><rect x="2441.42" y="415" width="4.90" height="1.6" fill="#64468a"/><rect x="2440.62" y="416" width="0.9" height="66" fill="rgba(150,80,130,0.35)"/><rect x="2440.62" y="416" width="0.9" height="66" fill="rgba(170,110,100,0.45)"/><rect x="2450.07" y="415" width="6.5" height="67" fill="#5b4782"/><rect x="2450.87" y="415" width="4.90" height="1.6" fill="#64468a"/><rect x="2450.07" y="416" width="0.9" height="66" fill="rgba(150,80,130,0.35)"/><rect x="2450.07" y="416" width="0.9" height="66" fill="rgba(170,110,100,0.45)"/><rect x="2459.52" y="415" width="6.5" height="67" fill="#5b4782"/><rect x="2460.32" y="415" width="4.90" height="1.6" fill="#64468a"/><rect x="2459.52" y="416" width="0.9" height="66" fill="rgba(150,80,130,0.35)"/><rect x="2465.12" y="416" width="0.9" height="66" fill="rgba(170,110,100,0.45)"/><rect x="2468.98" y="415" width="6.5" height="67" fill="#5b4782"/><rect x="2469.78" y="415" width="4.90" height="1.6" fill="#64468a"/><rect x="2468.98" y="416" width="0.9" height="66" fill="rgba(150,80,130,0.35)"/><rect x="2468.98" y="416" width="0.9" height="66" fill="rgba(170,110,100,0.45)"/><rect x="2478.43" y="415" width="6.5" height="67" fill="#5b4782"/><rect x="2479.23" y="415" width="4.90" height="1.6" fill="#64468a"/><rect x="2478.43" y="416" width="0.9" height="66" fill="rgba(150,80,130,0.35)"/><rect x="2484.03" y="416" width="0.9" height="66" fill="rgba(170,110,100,0.45)"/><rect x="2487.88" y="415" width="6.5" height="67" fill="#5b4782"/><rect x="2488.68" y="415" width="4.90" height="1.6" fill="#64468a"/><rect x="2487.88" y="416" width="0.9" height="66" fill="rgba(150,80,130,0.35)"/><rect x="2493.48" y="416" width="0.9" height="66" fill="rgba(170,110,100,0.45)"/><rect x="2497.33" y="415" width="6.5" height="67" fill="#5b4782"/><rect x="2498.13" y="415" width="4.90" height="1.6" fill="#64468a"/><rect x="2497.33" y="416" width="0.9" height="66" fill="rgba(150,80,130,0.35)"/><rect x="2506.78" y="415" width="6.5" height="67" fill="#5b4782"/><rect x="2507.58" y="415" width="4.90" height="1.6" fill="#64468a"/><rect x="2506.78" y="416" width="0.9" height="66" fill="rgba(150,80,130,0.35)"/><rect x="2512.38" y="416" width="0.9" height="66" fill="rgba(170,110,100,0.45)"/><rect x="2516.23" y="415" width="6.5" height="67" fill="#5b4782"/><rect x="2517.03" y="415" width="4.90" height="1.6" fill="#64468a"/><rect x="2516.23" y="416" width="0.9" height="66" fill="rgba(150,80,130,0.35)"/><rect x="2516.23" y="416" width="0.9" height="66" fill="rgba(170,110,100,0.45)"/><rect x="2525.68" y="415" width="6.5" height="67" fill="#5b4782"/><rect x="2526.48" y="415" width="4.90" height="1.6" fill="#64468a"/><rect x="2525.68" y="416" width="0.9" height="66" fill="rgba(150,80,130,0.35)"/><rect x="2535.13" y="415" width="6.5" height="67" fill="#5b4782"/><rect x="2535.93" y="415" width="4.90" height="1.6" fill="#64468a"/><rect x="2535.13" y="416" width="0.9" height="66" fill="rgba(150,80,130,0.35)"/><rect x="2535.13" y="416" width="0.9" height="66" fill="rgba(170,110,100,0.45)"/><rect x="2544.58" y="415" width="6.5" height="67" fill="#5b4782"/><rect x="2545.38" y="415" width="4.90" height="1.6" fill="#64468a"/><rect x="2544.58" y="416" width="0.9" height="66" fill="rgba(150,80,130,0.35)"/><rect x="2550.18" y="416" width="0.9" height="66" fill="rgba(170,110,100,0.45)"/><rect x="2554.03" y="415" width="6.5" height="67" fill="#5b4782"/><rect x="2554.83" y="415" width="4.90" height="1.6" fill="#64468a"/><rect x="2554.03" y="416" width="0.9" height="66" fill="rgba(150,80,130,0.35)"/><rect x="2554.03" y="416" width="0.9" height="66" fill="rgba(170,110,100,0.45)"/><rect x="2563.48" y="415" width="6.5" height="67" fill="#5b4782"/><rect x="2564.28" y="415" width="4.90" height="1.6" fill="#64468a"/><rect x="2563.48" y="416" width="0.9" height="66" fill="rgba(150,80,130,0.35)"/><rect x="2563.48" y="416" width="0.9" height="66" fill="rgba(170,110,100,0.45)"/><rect x="2572.93" y="415" width="6.5" height="67" fill="#5b4782"/><rect x="2573.73" y="415" width="4.90" height="1.6" fill="#64468a"/><rect x="2572.93" y="416" width="0.9" height="66" fill="rgba(150,80,130,0.35)"/><rect x="2582.39" y="415" width="6.5" height="67" fill="#5b4782"/><rect x="2583.19" y="415" width="4.90" height="1.6" fill="#64468a"/><rect x="2582.39" y="416" width="0.9" height="66" fill="rgba(150,80,130,0.35)"/><rect x="2587.99" y="416" width="0.9" height="66" fill="rgba(170,110,100,0.45)"/><rect x="2591.84" y="415" width="6.5" height="67" fill="#5b4782"/><rect x="2592.64" y="415" width="4.90" height="1.6" fill="#64468a"/><rect x="2591.84" y="416" width="0.9" height="66" fill="rgba(150,80,130,0.35)"/><rect x="2591.84" y="416" width="0.9" height="66" fill="rgba(170,110,100,0.45)"/><rect x="2601.29" y="415" width="6.5" height="67" fill="#5b4782"/><rect x="2602.09" y="415" width="4.90" height="1.6" fill="#64468a"/><rect x="2601.29" y="416" width="0.9" height="66" fill="rgba(150,80,130,0.35)"/><rect x="2606.89" y="416" width="0.9" height="66" fill="rgba(170,110,100,0.45)"/><rect x="2610.74" y="415" width="6.5" height="67" fill="#5b4782"/><rect x="2611.54" y="415" width="4.90" height="1.6" fill="#64468a"/><rect x="2610.74" y="416" width="0.9" height="66" fill="rgba(150,80,130,0.35)"/><rect x="2616.34" y="416" width="0.9" height="66" fill="rgba(170,110,100,0.45)"/><rect x="2620.19" y="415" width="6.5" height="67" fill="#5b4782"/><rect x="2620.99" y="415" width="4.90" height="1.6" fill="#64468a"/><rect x="2620.19" y="416" width="0.9" height="66" fill="rgba(150,80,130,0.35)"/><rect x="2629.64" y="415" width="6.5" height="67" fill="#5b4782"/><rect x="2630.44" y="415" width="4.90" height="1.6" fill="#64468a"/><rect x="2629.64" y="416" width="0.9" height="66" fill="rgba(150,80,130,0.35)"/><rect x="2629.64" y="416" width="0.9" height="66" fill="rgba(170,110,100,0.45)"/><rect x="2639.09" y="415" width="6.5" height="67" fill="#5b4782"/><rect x="2639.89" y="415" width="4.90" height="1.6" fill="#64468a"/><rect x="2639.09" y="416" width="0.9" height="66" fill="rgba(150,80,130,0.35)"/><rect x="2639.09" y="416" width="0.9" height="66" fill="rgba(170,110,100,0.45)"/><rect x="2648.54" y="415" width="6.5" height="67" fill="#5b4782"/><rect x="2649.34" y="415" width="4.90" height="1.6" fill="#64468a"/><rect x="2648.54" y="416" width="0.9" height="66" fill="rgba(150,80,130,0.35)"/><rect x="2657.99" y="415" width="6.5" height="67" fill="#5b4782"/><rect x="2658.79" y="415" width="4.90" height="1.6" fill="#64468a"/><rect x="2657.99" y="416" width="0.9" height="66" fill="rgba(150,80,130,0.35)"/><rect x="2667.44" y="415" width="6.5" height="67" fill="#5b4782"/><rect x="2668.24" y="415" width="4.90" height="1.6" fill="#64468a"/><rect x="2667.44" y="416" width="0.9" height="66" fill="rgba(150,80,130,0.35)"/><rect x="2667.44" y="416" width="0.9" height="66" fill="rgba(170,110,100,0.45)"/><rect x="2676.89" y="415" width="6.5" height="67" fill="#5b4782"/><rect x="2677.69" y="415" width="4.90" height="1.6" fill="#64468a"/><rect x="2676.89" y="416" width="0.9" height="66" fill="rgba(150,80,130,0.35)"/><rect x="2676.89" y="416" width="0.9" height="66" fill="rgba(170,110,100,0.45)"/><rect x="2686.35" y="415" width="6.5" height="67" fill="#5b4782"/><rect x="2687.15" y="415" width="4.90" height="1.6" fill="#64468a"/><rect x="2686.35" y="416" width="0.9" height="66" fill="rgba(150,80,130,0.35)"/><rect x="2686.35" y="416" width="0.9" height="66" fill="rgba(170,110,100,0.45)"/><rect x="2695.80" y="415" width="6.5" height="67" fill="#5b4782"/><rect x="2696.60" y="415" width="4.90" height="1.6" fill="#64468a"/><rect x="2695.80" y="416" width="0.9" height="66" fill="rgba(150,80,130,0.35)"/><rect x="2695.80" y="416" width="0.9" height="66" fill="rgba(170,110,100,0.45)"/><rect x="2705.25" y="415" width="6.5" height="67" fill="#5b4782"/><rect x="2706.05" y="415" width="4.90" height="1.6" fill="#64468a"/><rect x="2705.25" y="416" width="0.9" height="66" fill="rgba(150,80,130,0.35)"/><rect x="2705.25" y="416" width="0.9" height="66" fill="rgba(170,110,100,0.45)"/><rect x="2714.70" y="415" width="6.5" height="67" fill="#5b4782"/><rect x="2715.50" y="415" width="4.90" height="1.6" fill="#64468a"/><rect x="2714.70" y="416" width="0.9" height="66" fill="rgba(150,80,130,0.35)"/><rect x="2714.70" y="416" width="0.9" height="66" fill="rgba(170,110,100,0.45)"/><rect x="2724.15" y="415" width="6.5" height="67" fill="#5b4782"/><rect x="2724.95" y="415" width="4.90" height="1.6" fill="#64468a"/><rect x="2724.15" y="416" width="0.9" height="66" fill="rgba(150,80,130,0.35)"/><rect x="2724.15" y="416" width="0.9" height="66" fill="rgba(170,110,100,0.45)"/><rect x="2733.60" y="415" width="6.5" height="67" fill="#5b4782"/><rect x="2734.40" y="415" width="4.90" height="1.6" fill="#64468a"/><rect x="2733.60" y="416" width="0.9" height="66" fill="rgba(150,80,130,0.35)"/><rect x="2733.60" y="416" width="0.9" height="66" fill="rgba(170,110,100,0.45)"/><rect x="2743.05" y="415" width="6.5" height="67" fill="#5b4782"/><rect x="2743.85" y="415" width="4.90" height="1.6" fill="#64468a"/><rect x="2743.05" y="416" width="0.9" height="66" fill="rgba(150,80,130,0.35)"/><rect x="2752.50" y="415" width="6.5" height="67" fill="#5b4782"/><rect x="2753.30" y="415" width="4.90" height="1.6" fill="#64468a"/><rect x="2752.50" y="416" width="0.9" height="66" fill="rgba(150,80,130,0.35)"/><rect x="2752.50" y="416" width="0.9" height="66" fill="rgba(170,110,100,0.45)"/><rect x="2761.95" y="415" width="6.5" height="67" fill="#5b4782"/><rect x="2762.75" y="415" width="4.90" height="1.6" fill="#64468a"/><rect x="2761.95" y="416" width="0.9" height="66" fill="rgba(150,80,130,0.35)"/><rect x="2771.40" y="415" width="6.5" height="67" fill="#5b4782"/><rect x="2772.20" y="415" width="4.90" height="1.6" fill="#64468a"/><rect x="2771.40" y="416" width="0.9" height="66" fill="rgba(150,80,130,0.35)"/><rect x="2780.85" y="415" width="6.5" height="67" fill="#5b4782"/><rect x="2781.65" y="415" width="4.90" height="1.6" fill="#64468a"/><rect x="2780.85" y="416" width="0.9" height="66" fill="rgba(150,80,130,0.35)"/><rect x="2786.45" y="416" width="0.9" height="66" fill="rgba(170,110,100,0.45)"/><rect x="2790.31" y="415" width="6.5" height="67" fill="#5b4782"/><rect x="2791.11" y="415" width="4.90" height="1.6" fill="#64468a"/><rect x="2790.31" y="416" width="0.9" height="66" fill="rgba(150,80,130,0.35)"/><rect x="2790.31" y="416" width="0.9" height="66" fill="rgba(170,110,100,0.45)"/><rect x="2799.76" y="415" width="6.5" height="67" fill="#5b4782"/><rect x="2800.56" y="415" width="4.90" height="1.6" fill="#64468a"/><rect x="2799.76" y="416" width="0.9" height="66" fill="rgba(150,80,130,0.35)"/><rect x="2809.21" y="415" width="6.5" height="67" fill="#5b4782"/><rect x="2810.01" y="415" width="4.90" height="1.6" fill="#64468a"/><rect x="2809.21" y="416" width="0.9" height="66" fill="rgba(150,80,130,0.35)"/><rect x="2818.66" y="415" width="6.5" height="67" fill="#5b4782"/><rect x="2819.46" y="415" width="4.90" height="1.6" fill="#64468a"/><rect x="2818.66" y="416" width="0.9" height="66" fill="rgba(150,80,130,0.35)"/><rect x="2824.26" y="416" width="0.9" height="66" fill="rgba(170,110,100,0.45)"/><rect x="2828.11" y="415" width="6.5" height="67" fill="#5b4782"/><rect x="2828.91" y="415" width="4.90" height="1.6" fill="#64468a"/><rect x="2828.11" y="416" width="0.9" height="66" fill="rgba(150,80,130,0.35)"/><rect x="2833.71" y="416" width="0.9" height="66" fill="rgba(170,110,100,0.45)"/><rect x="2837.56" y="415" width="6.5" height="67" fill="#5b4782"/><rect x="2838.36" y="415" width="4.90" height="1.6" fill="#64468a"/><rect x="2837.56" y="416" width="0.9" height="66" fill="rgba(150,80,130,0.35)"/><rect x="2837.56" y="416" width="0.9" height="66" fill="rgba(170,110,100,0.45)"/><rect x="2847.01" y="415" width="6.5" height="67" fill="#5b4782"/><rect x="2847.81" y="415" width="4.90" height="1.6" fill="#64468a"/><rect x="2847.01" y="416" width="0.9" height="66" fill="rgba(150,80,130,0.35)"/><rect x="2852.61" y="416" width="0.9" height="66" fill="rgba(170,110,100,0.45)"/><rect x="2856.46" y="415" width="6.5" height="67" fill="#5b4782"/><rect x="2857.26" y="415" width="4.90" height="1.6" fill="#64468a"/><rect x="2856.46" y="416" width="0.9" height="66" fill="rgba(150,80,130,0.35)"/><rect x="2862.06" y="416" width="0.9" height="66" fill="rgba(170,110,100,0.45)"/><rect x="2865.91" y="415" width="6.5" height="67" fill="#5b4782"/><rect x="2866.71" y="415" width="4.90" height="1.6" fill="#64468a"/><rect x="2865.91" y="416" width="0.9" height="66" fill="rgba(150,80,130,0.35)"/><rect x="2871.51" y="416" width="0.9" height="66" fill="rgba(170,110,100,0.45)"/><rect x="2875.36" y="415" width="6.5" height="67" fill="#5b4782"/><rect x="2876.16" y="415" width="4.90" height="1.6" fill="#64468a"/><rect x="2875.36" y="416" width="0.9" height="66" fill="rgba(150,80,130,0.35)"/><rect x="2875.36" y="416" width="0.9" height="66" fill="rgba(170,110,100,0.45)"/><rect x="2884.81" y="415" width="6.5" height="67" fill="#5b4782"/><rect x="2885.61" y="415" width="4.90" height="1.6" fill="#64468a"/><rect x="2884.81" y="416" width="0.9" height="66" fill="rgba(150,80,130,0.35)"/><rect x="2894.27" y="415" width="6.5" height="67" fill="#5b4782"/><rect x="2895.07" y="415" width="4.90" height="1.6" fill="#64468a"/><rect x="2894.27" y="416" width="0.9" height="66" fill="rgba(150,80,130,0.35)"/><rect x="2903.72" y="415" width="6.5" height="67" fill="#5b4782"/><rect x="2904.52" y="415" width="4.90" height="1.6" fill="#64468a"/><rect x="2903.72" y="416" width="0.9" height="66" fill="rgba(150,80,130,0.35)"/><rect x="2909.32" y="416" width="0.9" height="66" fill="rgba(170,110,100,0.45)"/><rect x="2913.17" y="415" width="6.5" height="67" fill="#5b4782"/><rect x="2913.97" y="415" width="4.90" height="1.6" fill="#64468a"/><rect x="2913.17" y="416" width="0.9" height="66" fill="rgba(150,80,130,0.35)"/><rect x="2922.62" y="415" width="6.5" height="67" fill="#5b4782"/><rect x="2923.42" y="415" width="4.90" height="1.6" fill="#64468a"/><rect x="2922.62" y="416" width="0.9" height="66" fill="rgba(150,80,130,0.35)"/><rect x="2922.62" y="416" width="0.9" height="66" fill="rgba(170,110,100,0.45)"/><rect x="2932.07" y="415" width="6.5" height="67" fill="#5b4782"/><rect x="2932.87" y="415" width="4.90" height="1.6" fill="#64468a"/><rect x="2932.07" y="416" width="0.9" height="66" fill="rgba(150,80,130,0.35)"/><rect x="2937.67" y="416" width="0.9" height="66" fill="rgba(170,110,100,0.45)"/><rect x="2941.52" y="415" width="6.5" height="67" fill="#5b4782"/><rect x="2942.32" y="415" width="4.90" height="1.6" fill="#64468a"/><rect x="2941.52" y="416" width="0.9" height="66" fill="rgba(150,80,130,0.35)"/><rect x="2950.97" y="415" width="6.5" height="67" fill="#5b4782"/><rect x="2951.77" y="415" width="4.90" height="1.6" fill="#64468a"/><rect x="2950.97" y="416" width="0.9" height="66" fill="rgba(150,80,130,0.35)"/><rect x="2960.42" y="415" width="6.5" height="67" fill="#5b4782"/><rect x="2961.22" y="415" width="4.90" height="1.6" fill="#64468a"/><rect x="2960.42" y="416" width="0.9" height="66" fill="rgba(150,80,130,0.35)"/><rect x="2966.02" y="416" width="0.9" height="66" fill="rgba(170,110,100,0.45)"/><rect x="2969.87" y="415" width="6.5" height="67" fill="#5b4782"/><rect x="2970.67" y="415" width="4.90" height="1.6" fill="#64468a"/><rect x="2969.87" y="416" width="0.9" height="66" fill="rgba(150,80,130,0.35)"/><rect x="2979.32" y="415" width="6.5" height="67" fill="#5b4782"/><rect x="2980.12" y="415" width="4.90" height="1.6" fill="#64468a"/><rect x="2979.32" y="416" width="0.9" height="66" fill="rgba(150,80,130,0.35)"/><rect x="2984.92" y="416" width="0.9" height="66" fill="rgba(170,110,100,0.45)"/><rect x="2988.77" y="415" width="6.5" height="67" fill="#5b4782"/><rect x="2989.57" y="415" width="4.90" height="1.6" fill="#64468a"/><rect x="2988.77" y="416" width="0.9" height="66" fill="rgba(150,80,130,0.35)"/><rect x="2988.77" y="416" width="0.9" height="66" fill="rgba(170,110,100,0.45)"/><rect x="2998.23" y="415" width="6.5" height="67" fill="#5b4782"/><rect x="2999.03" y="415" width="4.90" height="1.6" fill="#64468a"/><rect x="2998.23" y="416" width="0.9" height="66" fill="rgba(150,80,130,0.35)"/><rect x="3007.68" y="415" width="6.5" height="67" fill="#5b4782"/><rect x="3008.48" y="415" width="4.90" height="1.6" fill="#64468a"/><rect x="3007.68" y="416" width="0.9" height="66" fill="rgba(150,80,130,0.35)"/><rect x="3017.13" y="415" width="6.5" height="67" fill="#5b4782"/><rect x="3017.93" y="415" width="4.90" height="1.6" fill="#64468a"/><rect x="3017.13" y="416" width="0.9" height="66" fill="rgba(150,80,130,0.35)"/><rect x="3022.73" y="416" width="0.9" height="66" fill="rgba(170,110,100,0.45)"/><rect x="3026.58" y="415" width="6.5" height="67" fill="#5b4782"/><rect x="3027.38" y="415" width="4.90" height="1.6" fill="#64468a"/><rect x="3026.58" y="416" width="0.9" height="66" fill="rgba(150,80,130,0.35)"/><rect x="3026.58" y="416" width="0.9" height="66" fill="rgba(170,110,100,0.45)"/><rect x="3036.03" y="415" width="6.5" height="67" fill="#5b4782"/><rect x="3036.83" y="415" width="4.90" height="1.6" fill="#64468a"/><rect x="3036.03" y="416" width="0.9" height="66" fill="rgba(150,80,130,0.35)"/><rect x="3036.03" y="416" width="0.9" height="66" fill="rgba(170,110,100,0.45)"/><rect x="3045.48" y="415" width="6.5" height="67" fill="#5b4782"/><rect x="3046.28" y="415" width="4.90" height="1.6" fill="#64468a"/><rect x="3045.48" y="416" width="0.9" height="66" fill="rgba(150,80,130,0.35)"/><rect x="3051.08" y="416" width="0.9" height="66" fill="rgba(170,110,100,0.45)"/><rect x="3054.93" y="415" width="6.5" height="67" fill="#5b4782"/><rect x="3055.73" y="415" width="4.90" height="1.6" fill="#64468a"/><rect x="3054.93" y="416" width="0.9" height="66" fill="rgba(150,80,130,0.35)"/><rect x="3060.53" y="416" width="0.9" height="66" fill="rgba(170,110,100,0.45)"/><rect x="3064.38" y="415" width="6.5" height="67" fill="#5b4782"/><rect x="3065.18" y="415" width="4.90" height="1.6" fill="#64468a"/><rect x="3064.38" y="416" width="0.9" height="66" fill="rgba(150,80,130,0.35)"/><rect x="3069.98" y="416" width="0.9" height="66" fill="rgba(170,110,100,0.45)"/><rect x="3073.83" y="415" width="6.5" height="67" fill="#5b4782"/><rect x="3074.63" y="415" width="4.90" height="1.6" fill="#64468a"/><rect x="3073.83" y="416" width="0.9" height="66" fill="rgba(150,80,130,0.35)"/><rect x="3083.28" y="415" width="6.5" height="67" fill="#5b4782"/><rect x="3084.08" y="415" width="4.90" height="1.6" fill="#64468a"/><rect x="3083.28" y="416" width="0.9" height="66" fill="rgba(150,80,130,0.35)"/><rect x="3088.88" y="416" width="0.9" height="66" fill="rgba(170,110,100,0.45)"/><rect x="3092.73" y="415" width="6.5" height="67" fill="#5b4782"/><rect x="3093.53" y="415" width="4.90" height="1.6" fill="#64468a"/><rect x="3092.73" y="416" width="0.9" height="66" fill="rgba(150,80,130,0.35)"/><rect x="3092.73" y="416" width="0.9" height="66" fill="rgba(170,110,100,0.45)"/><rect x="3102.19" y="415" width="6.5" height="67" fill="#5b4782"/><rect x="3102.99" y="415" width="4.90" height="1.6" fill="#64468a"/><rect x="3102.19" y="416" width="0.9" height="66" fill="rgba(150,80,130,0.35)"/><rect x="3102.19" y="416" width="0.9" height="66" fill="rgba(170,110,100,0.45)"/><rect x="3111.64" y="415" width="6.5" height="67" fill="#5b4782"/><rect x="3112.44" y="415" width="4.90" height="1.6" fill="#64468a"/><rect x="3111.64" y="416" width="0.9" height="66" fill="rgba(150,80,130,0.35)"/><rect x="3117.24" y="416" width="0.9" height="66" fill="rgba(170,110,100,0.45)"/><rect x="3121.09" y="415" width="6.5" height="67" fill="#5b4782"/><rect x="3121.89" y="415" width="4.90" height="1.6" fill="#64468a"/><rect x="3121.09" y="416" width="0.9" height="66" fill="rgba(150,80,130,0.35)"/><rect x="3126.69" y="416" width="0.9" height="66" fill="rgba(170,110,100,0.45)"/><rect x="3130.54" y="415" width="6.5" height="67" fill="#5b4782"/><rect x="3131.34" y="415" width="4.90" height="1.6" fill="#64468a"/><rect x="3130.54" y="416" width="0.9" height="66" fill="rgba(150,80,130,0.35)"/><rect x="3130.54" y="416" width="0.9" height="66" fill="rgba(170,110,100,0.45)"/><rect x="3139.99" y="415" width="6.5" height="67" fill="#5b4782"/><rect x="3140.79" y="415" width="4.90" height="1.6" fill="#64468a"/><rect x="3139.99" y="416" width="0.9" height="66" fill="rgba(150,80,130,0.35)"/><rect x="3139.99" y="416" width="0.9" height="66" fill="rgba(170,110,100,0.45)"/><rect x="3149.44" y="415" width="6.5" height="67" fill="#5b4782"/><rect x="3150.24" y="415" width="4.90" height="1.6" fill="#64468a"/><rect x="3149.44" y="416" width="0.9" height="66" fill="rgba(150,80,130,0.35)"/><rect x="3155.04" y="416" width="0.9" height="66" fill="rgba(170,110,100,0.45)"/><rect x="3158.89" y="415" width="6.5" height="67" fill="#5b4782"/><rect x="3159.69" y="415" width="4.90" height="1.6" fill="#64468a"/><rect x="3158.89" y="416" width="0.9" height="66" fill="rgba(150,80,130,0.35)"/><rect x="3168.34" y="415" width="6.5" height="67" fill="#5b4782"/><rect x="3169.14" y="415" width="4.90" height="1.6" fill="#64468a"/><rect x="3168.34" y="416" width="0.9" height="66" fill="rgba(150,80,130,0.35)"/><rect x="3177.79" y="415" width="6.5" height="67" fill="#5b4782"/><rect x="3178.59" y="415" width="4.90" height="1.6" fill="#64468a"/><rect x="3177.79" y="416" width="0.9" height="66" fill="rgba(150,80,130,0.35)"/><rect x="3187.24" y="415" width="6.5" height="67" fill="#5b4782"/><rect x="3188.04" y="415" width="4.90" height="1.6" fill="#64468a"/><rect x="3187.24" y="416" width="0.9" height="66" fill="rgba(150,80,130,0.35)"/><rect x="3192.84" y="416" width="0.9" height="66" fill="rgba(170,110,100,0.45)"/><rect x="3196.69" y="415" width="6.5" height="67" fill="#5b4782"/><rect x="3197.49" y="415" width="4.90" height="1.6" fill="#64468a"/><rect x="3196.69" y="416" width="0.9" height="66" fill="rgba(150,80,130,0.35)"/><rect x="3202.29" y="416" width="0.9" height="66" fill="rgba(170,110,100,0.45)"/><rect x="3206.15" y="415" width="6.5" height="67" fill="#5b4782"/><rect x="3206.95" y="415" width="4.90" height="1.6" fill="#64468a"/><rect x="3206.15" y="416" width="0.9" height="66" fill="rgba(150,80,130,0.35)"/><rect x="3211.75" y="416" width="0.9" height="66" fill="rgba(170,110,100,0.45)"/><rect x="3215.60" y="415" width="6.5" height="67" fill="#5b4782"/><rect x="3216.40" y="415" width="4.90" height="1.6" fill="#64468a"/><rect x="3215.60" y="416" width="0.9" height="66" fill="rgba(150,80,130,0.35)"/><rect x="3225.05" y="415" width="6.5" height="67" fill="#5b4782"/><rect x="3225.85" y="415" width="4.90" height="1.6" fill="#64468a"/><rect x="3225.05" y="416" width="0.9" height="66" fill="rgba(150,80,130,0.35)"/><rect x="3230.65" y="416" width="0.9" height="66" fill="rgba(170,110,100,0.45)"/><rect x="3234.50" y="415" width="6.5" height="67" fill="#5b4782"/><rect x="3235.30" y="415" width="4.90" height="1.6" fill="#64468a"/><rect x="3234.50" y="416" width="0.9" height="66" fill="rgba(150,80,130,0.35)"/><rect x="3240.10" y="416" width="0.9" height="66" fill="rgba(170,110,100,0.45)"/><rect x="3243.95" y="415" width="6.5" height="67" fill="#5b4782"/><rect x="3244.75" y="415" width="4.90" height="1.6" fill="#64468a"/><rect x="3243.95" y="416" width="0.9" height="66" fill="rgba(150,80,130,0.35)"/><rect x="3243.95" y="416" width="0.9" height="66" fill="rgba(170,110,100,0.45)"/><rect x="3253.40" y="415" width="6.5" height="67" fill="#5b4782"/><rect x="3254.20" y="415" width="4.90" height="1.6" fill="#64468a"/><rect x="3253.40" y="416" width="0.9" height="66" fill="rgba(150,80,130,0.35)"/><rect x="3262.85" y="415" width="6.5" height="67" fill="#5b4782"/><rect x="3263.65" y="415" width="4.90" height="1.6" fill="#64468a"/><rect x="3262.85" y="416" width="0.9" height="66" fill="rgba(150,80,130,0.35)"/><rect x="3272.30" y="415" width="6.5" height="67" fill="#5b4782"/><rect x="3273.10" y="415" width="4.90" height="1.6" fill="#64468a"/><rect x="3272.30" y="416" width="0.9" height="66" fill="rgba(150,80,130,0.35)"/><rect x="3277.90" y="416" width="0.9" height="66" fill="rgba(170,110,100,0.45)"/><rect x="3281.75" y="415" width="6.5" height="67" fill="#5b4782"/><rect x="3282.55" y="415" width="4.90" height="1.6" fill="#64468a"/><rect x="3281.75" y="416" width="0.9" height="66" fill="rgba(150,80,130,0.35)"/><rect x="3287.35" y="416" width="0.9" height="66" fill="rgba(170,110,100,0.45)"/><rect x="3291.20" y="415" width="6.5" height="67" fill="#5b4782"/><rect x="3292.00" y="415" width="4.90" height="1.6" fill="#64468a"/><rect x="3291.20" y="416" width="0.9" height="66" fill="rgba(150,80,130,0.35)"/><rect x="3300.65" y="415" width="6.5" height="67" fill="#5b4782"/><rect x="3301.45" y="415" width="4.90" height="1.6" fill="#64468a"/><rect x="3300.65" y="416" width="0.9" height="66" fill="rgba(150,80,130,0.35)"/><rect x="3300.65" y="416" width="0.9" height="66" fill="rgba(170,110,100,0.45)"/><rect x="3310.11" y="415" width="6.5" height="67" fill="#5b4782"/><rect x="3310.91" y="415" width="4.90" height="1.6" fill="#64468a"/><rect x="3310.11" y="416" width="0.9" height="66" fill="rgba(150,80,130,0.35)"/><rect x="3319.56" y="415" width="6.5" height="67" fill="#5b4782"/><rect x="3320.36" y="415" width="4.90" height="1.6" fill="#64468a"/><rect x="3319.56" y="416" width="0.9" height="66" fill="rgba(150,80,130,0.35)"/><rect x="3325.16" y="416" width="0.9" height="66" fill="rgba(170,110,100,0.45)"/><rect x="3329.01" y="415" width="6.5" height="67" fill="#5b4782"/><rect x="3329.81" y="415" width="4.90" height="1.6" fill="#64468a"/><rect x="3329.01" y="416" width="0.9" height="66" fill="rgba(150,80,130,0.35)"/><rect x="3334.61" y="416" width="0.9" height="66" fill="rgba(170,110,100,0.45)"/><rect x="3338.46" y="415" width="6.5" height="67" fill="#5b4782"/><rect x="3339.26" y="415" width="4.90" height="1.6" fill="#64468a"/><rect x="3338.46" y="416" width="0.9" height="66" fill="rgba(150,80,130,0.35)"/><rect x="3338.46" y="416" width="0.9" height="66" fill="rgba(170,110,100,0.45)"/><rect x="3347.91" y="415" width="6.5" height="67" fill="#5b4782"/><rect x="3348.71" y="415" width="4.90" height="1.6" fill="#64468a"/><rect x="3347.91" y="416" width="0.9" height="66" fill="rgba(150,80,130,0.35)"/><rect x="3347.91" y="416" width="0.9" height="66" fill="rgba(170,110,100,0.45)"/><rect x="3357.36" y="415" width="6.5" height="67" fill="#5b4782"/><rect x="3358.16" y="415" width="4.90" height="1.6" fill="#64468a"/><rect x="3357.36" y="416" width="0.9" height="66" fill="rgba(150,80,130,0.35)"/><rect x="3362.96" y="416" width="0.9" height="66" fill="rgba(170,110,100,0.45)"/><rect x="3366.81" y="415" width="6.5" height="67" fill="#5b4782"/><rect x="3367.61" y="415" width="4.90" height="1.6" fill="#64468a"/><rect x="3366.81" y="416" width="0.9" height="66" fill="rgba(150,80,130,0.35)"/><rect x="3376.26" y="415" width="6.5" height="67" fill="#5b4782"/><rect x="3377.06" y="415" width="4.90" height="1.6" fill="#64468a"/><rect x="3376.26" y="416" width="0.9" height="66" fill="rgba(150,80,130,0.35)"/><rect x="3376.26" y="416" width="0.9" height="66" fill="rgba(170,110,100,0.45)"/><rect x="3385.71" y="415" width="6.5" height="67" fill="#5b4782"/><rect x="3386.51" y="415" width="4.90" height="1.6" fill="#64468a"/><rect x="3385.71" y="416" width="0.9" height="66" fill="rgba(150,80,130,0.35)"/><rect x="3395.16" y="415" width="6.5" height="67" fill="#5b4782"/><rect x="3395.96" y="415" width="4.90" height="1.6" fill="#64468a"/><rect x="3395.16" y="416" width="0.9" height="66" fill="rgba(150,80,130,0.35)"/><rect x="3400.76" y="416" width="0.9" height="66" fill="rgba(170,110,100,0.45)"/><rect x="3404.61" y="415" width="6.5" height="67" fill="#5b4782"/><rect x="3405.41" y="415" width="4.90" height="1.6" fill="#64468a"/><rect x="3404.61" y="416" width="0.9" height="66" fill="rgba(150,80,130,0.35)"/><rect x="3414.07" y="415" width="6.5" height="67" fill="#5b4782"/><rect x="3414.87" y="415" width="4.90" height="1.6" fill="#64468a"/><rect x="3414.07" y="416" width="0.9" height="66" fill="rgba(150,80,130,0.35)"/><rect x="3419.66" y="416" width="0.9" height="66" fill="rgba(170,110,100,0.45)"/><rect x="3423.52" y="415" width="6.5" height="67" fill="#5b4782"/><rect x="3424.32" y="415" width="4.90" height="1.6" fill="#64468a"/><rect x="3423.52" y="416" width="0.9" height="66" fill="rgba(150,80,130,0.35)"/><rect x="3432.97" y="415" width="6.5" height="67" fill="#5b4782"/><rect x="3433.77" y="415" width="4.90" height="1.6" fill="#64468a"/><rect x="3432.97" y="416" width="0.9" height="66" fill="rgba(150,80,130,0.35)"/><rect x="3432.97" y="416" width="0.9" height="66" fill="rgba(170,110,100,0.45)"/><rect x="3442.42" y="415" width="6.5" height="67" fill="#5b4782"/><rect x="3443.22" y="415" width="4.90" height="1.6" fill="#64468a"/><rect x="3442.42" y="416" width="0.9" height="66" fill="rgba(150,80,130,0.35)"/><rect x="3448.02" y="416" width="0.9" height="66" fill="rgba(170,110,100,0.45)"/><rect x="3451.87" y="415" width="6.5" height="67" fill="#5b4782"/><rect x="3452.67" y="415" width="4.90" height="1.6" fill="#64468a"/><rect x="3451.87" y="416" width="0.9" height="66" fill="rgba(150,80,130,0.35)"/><rect x="3451.87" y="416" width="0.9" height="66" fill="rgba(170,110,100,0.45)"/><rect x="3461.32" y="415" width="6.5" height="67" fill="#5b4782"/><rect x="3462.12" y="415" width="4.90" height="1.6" fill="#64468a"/><rect x="3461.32" y="416" width="0.9" height="66" fill="rgba(150,80,130,0.35)"/></svg>
<div class="a t" style="right:3411px;top:340.7px;font-size:12px;line-height:16px;color:#ccccdc">2</div>
<div class="a t" style="right:3411px;top:357.3px;font-size:12px;line-height:16px;color:#ccccdc">1.75</div>
<div class="a t" style="right:3411px;top:373.9px;font-size:12px;line-height:16px;color:#ccccdc">1.5</div>
<div class="a t" style="right:3411px;top:390.5px;font-size:12px;line-height:16px;color:#ccccdc">1.25</div>
<div class="a t" style="right:3411px;top:407.1px;font-size:12px;line-height:16px;color:#ccccdc">1</div>
<div class="a t" style="right:3411px;top:423.6px;font-size:12px;line-height:16px;color:#ccccdc">0.75</div>
<div class="a t" style="right:3411px;top:440.2px;font-size:12px;line-height:16px;color:#ccccdc">0.5</div>
<div class="a t" style="right:3411px;top:456.8px;font-size:12px;line-height:16px;color:#ccccdc">0.25</div>
<div class="a t" style="right:3411px;top:473.4px;font-size:12px;line-height:16px;color:#ccccdc">0</div>
<div class="a t" style="left:79.5px;width:60px;text-align:center;top:489px;font-size:12px;line-height:16px;color:#ccccdc">11:52:10</div>
<div class="a t" style="left:174.0px;width:60px;text-align:center;top:489px;font-size:12px;line-height:16px;color:#ccccdc">11:52:20</div>
<div class="a t" style="left:268.5px;width:60px;text-align:center;top:489px;font-size:12px;line-height:16px;color:#ccccdc">11:52:30</div>
<div class="a t" style="left:363.0px;width:60px;text-align:center;top:489px;font-size:12px;line-height:16px;color:#ccccdc">11:52:40</div>
<div class="a t" style="left:457.5px;width:60px;text-align:center;top:489px;font-size:12px;line-height:16px;color:#ccccdc">11:52:50</div>
<div class="a t" style="left:552.0px;width:60px;text-align:center;top:489px;font-size:12px;line-height:16px;color:#ccccdc">11:53:00</div>
<div class="a t" style="left:646.6px;width:60px;text-align:center;top:489px;font-size:12px;line-height:16px;color:#ccccdc">11:53:10</div>
<div class="a t" style="left:741.1px;width:60px;text-align:center;top:489px;font-size:12px;line-height:16px;color:#ccccdc">11:53:20</div>
<div class="a t" style="left:835.6px;width:60px;text-align:center;top:489px;font-size:12px;line-height:16px;color:#ccccdc">11:53:30</div>
<div class="a t" style="left:930.1px;width:60px;text-align:center;top:489px;font-size:12px;line-height:16px;color:#ccccdc">11:53:40</div>
<div class="a t" style="left:1024.6px;width:60px;text-align:center;top:489px;font-size:12px;line-height:16px;color:#ccccdc">11:53:50</div>
<div class="a t" style="left:1119.1px;width:60px;text-align:center;top:489px;font-size:12px;line-height:16px;color:#ccccdc">11:54:00</div>
<div class="a t" style="left:1213.6px;width:60px;text-align:center;top:489px;font-size:12px;line-height:16px;color:#ccccdc">11:54:10</div>
<div class="a t" style="left:1308.1px;width:60px;text-align:center;top:489px;font-size:12px;line-height:16px;color:#ccccdc">11:54:20</div>
<div class="a t" style="left:1402.6px;width:60px;text-align:center;top:489px;font-size:12px;line-height:16px;color:#ccccdc">11:54:30</div>
<div class="a t" style="left:1497.1px;width:60px;text-align:center;top:489px;font-size:12px;line-height:16px;color:#ccccdc">11:54:40</div>
<div class="a t" style="left:1591.6px;width:60px;text-align:center;top:489px;font-size:12px;line-height:16px;color:#ccccdc">11:54:50</div>
<div class="a t" style="left:1686.2px;width:60px;text-align:center;top:489px;font-size:12px;line-height:16px;color:#ccccdc">11:55:00</div>
<div class="a t" style="left:1780.7px;width:60px;text-align:center;top:489px;font-size:12px;line-height:16px;color:#ccccdc">11:55:10</div>
<div class="a t" style="left:1875.2px;width:60px;text-align:center;top:489px;font-size:12px;line-height:16px;color:#ccccdc">11:55:20</div>
<div class="a t" style="left:1969.7px;width:60px;text-align:center;top:489px;font-size:12px;line-height:16px;color:#ccccdc">11:55:30</div>
<div class="a t" style="left:2064.2px;width:60px;text-align:center;top:489px;font-size:12px;line-height:16px;color:#ccccdc">11:55:40</div>
<div class="a t" style="left:2158.7px;width:60px;text-align:center;top:489px;font-size:12px;line-height:16px;color:#ccccdc">11:55:50</div>
<div class="a t" style="left:2253.2px;width:60px;text-align:center;top:489px;font-size:12px;line-height:16px;color:#ccccdc">11:56:00</div>
<div class="a t" style="left:2347.7px;width:60px;text-align:center;top:489px;font-size:12px;line-height:16px;color:#ccccdc">11:56:10</div>
<div class="a t" style="left:2442.2px;width:60px;text-align:center;top:489px;font-size:12px;line-height:16px;color:#ccccdc">11:56:20</div>
<div class="a t" style="left:2536.7px;width:60px;text-align:center;top:489px;font-size:12px;line-height:16px;color:#ccccdc">11:56:30</div>
<div class="a t" style="left:2631.2px;width:60px;text-align:center;top:489px;font-size:12px;line-height:16px;color:#ccccdc">11:56:40</div>
<div class="a t" style="left:2725.8px;width:60px;text-align:center;top:489px;font-size:12px;line-height:16px;color:#ccccdc">11:56:50</div>
<div class="a t" style="left:2820.3px;width:60px;text-align:center;top:489px;font-size:12px;line-height:16px;color:#ccccdc">11:57:00</div>
<div class="a t" style="left:2914.8px;width:60px;text-align:center;top:489px;font-size:12px;line-height:16px;color:#ccccdc">11:57:10</div>
<div class="a t" style="left:3009.3px;width:60px;text-align:center;top:489px;font-size:12px;line-height:16px;color:#ccccdc">11:57:20</div>
<div class="a t" style="left:3103.8px;width:60px;text-align:center;top:489px;font-size:12px;line-height:16px;color:#ccccdc">11:57:30</div>
<div class="a t" style="left:3198.3px;width:60px;text-align:center;top:489px;font-size:12px;line-height:16px;color:#ccccdc">11:57:40</div>
<div class="a t" style="left:3292.8px;width:60px;text-align:center;top:489px;font-size:12px;line-height:16px;color:#ccccdc">11:57:50</div>
<div class="a t" style="left:3387.3px;width:60px;text-align:center;top:489px;font-size:12px;line-height:16px;color:#ccccdc">11:58:00</div>
<div class="a" style="left:0;top:0;width:3475px;height:591px;overflow:hidden"><div class="a lm" style="left:38px;top:515.80px;width:14px;height:4px;border-radius:2px;background:#73bf69"></div><div class="a lt t" style="left:60px;top:510.00px;font-size:12px;line-height:16px;color:#ccccdc;--ls:0.7844px;letter-spacing:var(--ls)">gpu<span class="op">_</span>state<span class="op">{</span>Hostname<span class="op">=</span><span class="op">&quot;</span>sysqa<span class="op">-</span>ins<span class="op">-</span>b<span class="o1">1</span><span class="od">6</span><span class="op">&quot;</span><span class="op">,</span><span class="op"> </span>bios<span class="op">_</span>version<span class="op">=</span><span class="op">&quot;</span><span class="o1">1</span><span class="op">.</span><span class="o1">1</span><span class="od">8</span><span class="op">.</span><span class="o1">1</span><span class="op">.</span><span class="od">0</span><span class="op">&quot;</span><span class="op">,</span><span class="op"> </span>deviceId<span class="op">=</span><span class="op">&quot;</span><span class="od">0</span><span class="op">&quot;</span><span class="op">,</span><span class="op"> </span>driver<span class="op">_</span>version<span class="op">=</span><span class="op">&quot;</span><span class="od">2</span><span class="op">.</span><span class="od">9</span><span class="op">.</span><span class="od">3</span><span class="op">&quot;</span><span class="op">,</span><span class="op"> </span>instance<span class="op">=</span><span class="op">&quot;</span><span class="o1">1</span><span class="od">0</span><span class="op">.</span><span class="od">4</span><span class="od">0</span><span class="op">.</span><span class="o1">1</span><span class="op">.</span><span class="od">7</span><span class="od">3</span><span class="op">:</span><span class="od">8</span><span class="od">0</span><span class="od">0</span><span class="od">0</span><span class="op">&quot;</span><span class="op">,</span><span class="op"> </span>job<span class="op">=</span><span class="op">&quot;</span>metax<span class="op">-</span>mx<span class="op">-</span>exporter<span class="op">&quot;</span><span class="op">,</span><span class="op"> </span>modelName<span class="op">=</span><span class="op">&quot;</span>MXC<span class="od">5</span><span class="od">0</span><span class="od">0</span><span class="op"> </span>VF<span class="op">&quot;</span><span class="op">,</span><span class="op"> </span>uuid<span class="op">=</span><span class="op">&quot;</span>GPU<span class="op">-</span><span class="od">7</span><span class="od">0</span><span class="od">7</span><span class="od">0</span><span class="od">7</span><span class="od">8</span>ae<span class="op">-</span><span class="o1">1</span>fcf<span class="op">-</span><span class="od">0</span>ed<span class="od">7</span><span class="op">-</span><span class="o1">1</span><span class="od">0</span><span class="o1">1</span><span class="od">0</span><span class="op">-</span><span class="od">4</span><span class="od">8</span><span class="od">0</span><span class="od">2</span><span class="od">9</span><span class="od">9</span><span class="od">6</span><span class="od">9</span>e<span class="od">2</span><span class="od">8</span><span class="o1">1</span><span class="op">&quot;</span><span class="op">}</span></div><div class="a lm" style="left:1460.3px;top:515.80px;width:14px;height:4px;border-radius:2px;background:#fade2a"></div><div class="a lt t" style="left:1481.9px;top:510.00px;font-size:12px;line-height:16px;color:#ccccdc;--ls:0.7790px;letter-spacing:var(--ls)">gpu<span class="op">_</span>state<span class="op">{</span>Hostname<span class="op">=</span><span class="op">&quot;</span>sysqa<span class="op">-</span>ins<span class="op">-</span>b<span class="o1">1</span><span class="od">6</span><span class="op">&quot;</span><span class="op">,</span><span class="op"> </span>bios<span class="op">_</span>version<span class="op">=</span><span class="op">&quot;</span><span class="o1">1</span><span class="op">.</span><span class="o1">1</span><span class="od">8</span><span class="op">.</span><span class="o1">1</span><span class="op">.</span><span class="od">0</span><span class="op">&quot;</span><span class="op">,</span><span class="op"> </span>deviceId<span class="op">=</span><span class="op">&quot;</span><span class="o1">1</span><span class="op">&quot;</span><span class="op">,</span><span class="op"> </span>driver<span class="op">_</span>version<span class="op">=</span><span class="op">&quot;</span><span class="od">2</span><span class="op">.</span><span class="od">9</span><span class="op">.</span><span class="od">3</span><span class="op">&quot;</span><span class="op">,</span><span class="op"> </span>instance<span class="op">=</span><span class="op">&quot;</span><span class="o1">1</span><span class="od">0</span><span class="op">.</span><span class="od">4</span><span class="od">0</span><span class="op">.</span><span class="o1">1</span><span class="op">.</span><span class="od">7</span><span class="od">3</span><span class="op">:</span><span class="od">8</span><span class="od">0</span><span class="od">0</span><span class="od">0</span><span class="op">&quot;</span><span class="op">,</span><span class="op"> </span>job<span class="op">=</span><span class="op">&quot;</span>metax<span class="op">-</span>mx<span class="op">-</span>exporter<span class="op">&quot;</span><span class="op">,</span><span class="op"> </span>modelName<span class="op">=</span><span class="op">&quot;</span>MXC<span class="od">5</span><span class="od">0</span><span class="od">0</span><span class="op"> </span>VF<span class="op">&quot;</span><span class="op">,</span><span class="op"> </span>uuid<span class="op">=</span><span class="op">&quot;</span>GPU<span class="op">-</span><span class="od">9</span>aa<span class="od">2</span><span class="od">0</span>f<span class="od">3</span><span class="od">8</span><span class="op">-</span><span class="od">3</span><span class="od">2</span><span class="od">3</span><span class="od">3</span><span class="op">-</span><span class="od">6</span><span class="od">7</span><span class="od">6</span><span class="od">3</span><span class="op">-</span>fe<span class="od">7</span><span class="od">6</span><span class="op">-</span><span class="od">2</span><span class="od">9</span><span class="od">8</span><span class="od">8</span><span class="od">4</span><span class="od">6</span><span class="od">8</span>dd<span class="o1">1</span>fd<span class="op">&quot;</span><span class="op">}</span></div><div class="a lm" style="left:38px;top:538.73px;width:14px;height:4px;border-radius:2px;background:#8ab8ff"></div><div class="a lt t" style="left:60px;top:532.93px;font-size:12px;line-height:16px;color:#ccccdc;--ls:0.7876px;letter-spacing:var(--ls)">gpu<span class="op">_</span>state<span class="op">{</span>Hostname<span class="op">=</span><span class="op">&quot;</span>sysqa<span class="op">-</span>ins<span class="op">-</span>b<span class="o1">1</span><span class="od">6</span><span class="op">&quot;</span><span class="op">,</span><span class="op"> </span>bios<span class="op">_</span>version<span class="op">=</span><span class="op">&quot;</span><span class="o1">1</span><span class="op">.</span><span class="o1">1</span><span class="od">8</span><span class="op">.</span><span class="o1">1</span><span class="op">.</span><span class="od">0</span><span class="op">&quot;</span><span class="op">,</span><span class="op"> </span>deviceId<span class="op">=</span><span class="op">&quot;</span><span class="o1">1</span><span class="od">0</span><span class="op">&quot;</span><span class="op">,</span><span class="op"> </span>driver<span class="op">_</span>version<span class="op">=</span><span class="op">&quot;</span><span class="od">2</span><span class="op">.</span><span class="od">9</span><span class="op">.</span><span class="od">3</span><span class="op">&quot;</span><span class="op">,</span><span class="op"> </span>instance<span class="op">=</span><span class="op">&quot;</span><span class="o1">1</span><span class="od">0</span><span class="op">.</span><span class="od">4</span><span class="od">0</span><span class="op">.</span><span class="o1">1</span><span class="op">.</span><span class="od">7</span><span class="od">3</span><span class="op">:</span><span class="od">8</span><span class="od">0</span><span class="od">0</span><span class="od">0</span><span class="op">&quot;</span><span class="op">,</span><span class="op"> </span>job<span class="op">=</span><span class="op">&quot;</span>metax<span class="op">-</span>mx<span class="op">-</span>exporter<span class="op">&quot;</span><span class="op">,</span><span class="op"> </span>modelName<span class="op">=</span><span class="op">&quot;</span>MXC<span class="od">5</span><span class="od">0</span><span class="od">0</span><span class="op"> </span>VF<span class="op">&quot;</span><span class="op">,</span><span class="op"> </span>uuid<span class="op">=</span><span class="op">&quot;</span>GPU<span class="op">-</span><span class="od">3</span><span class="od">0</span>a<span class="od">2</span><span class="od">5</span><span class="o1">1</span><span class="od">9</span>f<span class="op">-</span><span class="od">9</span>b<span class="o1">1</span><span class="od">5</span><span class="op">-</span><span class="od">0</span>b<span class="od">8</span><span class="od">3</span><span class="op">-</span>d<span class="od">0</span><span class="od">7</span><span class="od">6</span><span class="op">-</span>bb<span class="o1">1</span><span class="od">9</span><span class="od">3</span><span class="od">5</span><span class="od">5</span><span class="od">7</span><span class="od">0</span><span class="od">5</span>dd<span class="op">&quot;</span><span class="op">}</span></div><div class="a lm" style="left:1472.1px;top:538.73px;width:14px;height:4px;border-radius:2px;background:#ff780a"></div><div class="a lt t" style="left:1494px;top:532.93px;font-size:12px;line-height:16px;color:#ccccdc;--ls:0.8307px;letter-spacing:var(--ls)">gpu<span class="op">_</span>state<span class="op">{</span>Hostname<span class="op">=</span><span class="op">&quot;</span>sysqa<span class="op">-</span>ins<span class="op">-</span>b<span class="o1">1</span><span class="od">6</span><span class="op">&quot;</span><span class="op">,</span><span class="op"> </span>bios<span class="op">_</span>version<span class="op">=</span><span class="op">&quot;</span><span class="o1">1</span><span class="op">.</span><span class="o1">1</span><span class="od">8</span><span class="op">.</span><span class="o1">1</span><span class="op">.</span><span class="od">0</span><span class="op">&quot;</span><span class="op">,</span><span class="op"> </span>deviceId<span class="op">=</span><span class="op">&quot;</span><span class="o1">1</span><span class="o1">1</span><span class="op">&quot;</span><span class="op">,</span><span class="op"> </span>driver<span class="op">_</span>version<span class="op">=</span><span class="op">&quot;</span><span class="od">2</span><span class="op">.</span><span class="od">9</span><span class="op">.</span><span class="od">3</span><span class="op">&quot;</span><span class="op">,</span><span class="op"> </span>instance<span class="op">=</span><span class="op">&quot;</span><span class="o1">1</span><span class="od">0</span><span class="op">.</span><span class="od">4</span><span class="od">0</span><span class="op">.</span><span class="o1">1</span><span class="op">.</span><span class="od">7</span><span class="od">3</span><span class="op">:</span><span class="od">8</span><span class="od">0</span><span class="od">0</span><span class="od">0</span><span class="op">&quot;</span><span class="op">,</span><span class="op"> </span>job<span class="op">=</span><span class="op">&quot;</span>metax<span class="op">-</span>mx<span class="op">-</span>exporter<span class="op">&quot;</span><span class="op">,</span><span class="op"> </span>modelName<span class="op">=</span><span class="op">&quot;</span>MXC<span class="od">5</span><span class="od">0</span><span class="od">0</span><span class="op"> </span>VF<span class="op">&quot;</span><span class="op">,</span><span class="op"> </span>uuid<span class="op">=</span><span class="op">&quot;</span>GPU<span class="op">-</span><span class="od">9</span><span class="od">4</span>aead<span class="od">0</span><span class="od">0</span><span class="op">-</span><span class="od">9</span>d<span class="od">2</span><span class="od">7</span><span class="op">-</span>f<span class="od">6</span>b<span class="od">7</span><span class="op">-</span><span class="o1">1</span>c<span class="od">0</span><span class="od">2</span><span class="op">-</span><span class="od">5</span>f<span class="od">0</span><span class="od">0</span><span class="od">8</span>f<span class="o1">1</span><span class="o1">1</span><span class="od">2</span>a<span class="od">2</span><span class="o1">1</span><span class="op">&quot;</span><span class="op">}</span></div><div class="a lm" style="left:38px;top:561.66px;width:14px;height:4px;border-radius:2px;background:#f2495c"></div><div class="a lt t" style="left:60px;top:555.86px;font-size:12px;line-height:16px;color:#ccccdc;--ls:0.7885px;letter-spacing:var(--ls)">gpu<span class="op">_</span>state<span class="op">{</span>Hostname<span class="op">=</span><span class="op">&quot;</span>sysqa<span class="op">-</span>ins<span class="op">-</span>b<span class="o1">1</span><span class="od">6</span><span class="op">&quot;</span><span class="op">,</span><span class="op"> </span>bios<span class="op">_</span>version<span class="op">=</span><span class="op">&quot;</span><span class="o1">1</span><span class="op">.</span><span class="o1">1</span><span class="od">8</span><span class="op">.</span><span class="o1">1</span><span class="op">.</span><span class="od">0</span><span class="op">&quot;</span><span class="op">,</span><span class="op"> </span>deviceId<span class="op">=</span><span class="op">&quot;</span><span class="o1">1</span><span class="od">2</span><span class="op">&quot;</span><span class="op">,</span><span class="op"> </span>driver<span class="op">_</span>version<span class="op">=</span><span class="op">&quot;</span><span class="od">2</span><span class="op">.</span><span class="od">9</span><span class="op">.</span><span class="od">3</span><span class="op">&quot;</span><span class="op">,</span><span class="op"> </span>instance<span class="op">=</span><span class="op">&quot;</span><span class="o1">1</span><span class="od">0</span><span class="op">.</span><span class="od">4</span><span class="od">0</span><span class="op">.</span><span class="o1">1</span><span class="op">.</span><span class="od">7</span><span class="od">3</span><span class="op">:</span><span class="od">8</span><span class="od">0</span><span class="od">0</span><span class="od">0</span><span class="op">&quot;</span><span class="op">,</span><span class="op"> </span>job<span class="op">=</span><span class="op">&quot;</span>metax<span class="op">-</span>mx<span class="op">-</span>exporter<span class="op">&quot;</span><span class="op">,</span><span class="op"> </span>modelName<span class="op">=</span><span class="op">&quot;</span>MXC<span class="od">5</span><span class="od">0</span><span class="od">0</span><span class="op"> </span>VF<span class="op">&quot;</span><span class="op">,</span><span class="op"> </span>uuid<span class="op">=</span><span class="op">&quot;</span>GPU<span class="op">-</span><span class="od">7</span>f<span class="o1">1</span><span class="od">6</span><span class="o1">1</span><span class="od">0</span><span class="od">8</span>c<span class="op">-</span>fa<span class="od">5</span><span class="od">7</span><span class="op">-</span><span class="od">6</span>a<span class="od">7</span><span class="od">5</span><span class="op">-</span><span class="od">3</span><span class="od">9</span><span class="od">0</span>a<span class="op">-</span>b<span class="od">0</span>f<span class="od">4</span><span class="od">5</span>e<span class="od">0</span><span class="o1">1</span><span class="od">6</span>ef<span class="od">7</span><span class="op">&quot;</span><span class="op">}</span></div><div class="a lm" style="left:1460.3px;top:561.66px;width:14px;height:4px;border-radius:2px;background:#5794f2"></div><div class="a lt t" style="left:1482px;top:555.86px;font-size:12px;line-height:16px;color:#ccccdc;--ls:0.8025px;letter-spacing:var(--ls)">gpu<span class="op">_</span>state<span class="op">{</span>Hostname<span class="op">=</span><span class="op">&quot;</span>sysqa<span class="op">-</span>ins<span class="op">-</span>b<span class="o1">1</span><span class="od">6</span><span class="op">&quot;</span><span class="op">,</span><span class="op"> </span>bios<span class="op">_</span>version<span class="op">=</span><span class="op">&quot;</span><span class="o1">1</span><span class="op">.</span><span class="o1">1</span><span class="od">8</span><span class="op">.</span><span class="o1">1</span><span class="op">.</span><span class="od">0</span><span class="op">&quot;</span><span class="op">,</span><span class="op"> </span>deviceId<span class="op">=</span><span class="op">&quot;</span><span class="o1">1</span><span class="od">3</span><span class="op">&quot;</span><span class="op">,</span><span class="op"> </span>driver<span class="op">_</span>version<span class="op">=</span><span class="op">&quot;</span><span class="od">2</span><span class="op">.</span><span class="od">9</span><span class="op">.</span><span class="od">3</span><span class="op">&quot;</span><span class="op">,</span><span class="op"> </span>instance<span class="op">=</span><span class="op">&quot;</span><span class="o1">1</span><span class="od">0</span><span class="op">.</span><span class="od">4</span><span class="od">0</span><span class="op">.</span><span class="o1">1</span><span class="op">.</span><span class="od">7</span><span class="od">3</span><span class="op">:</span><span class="od">8</span><span class="od">0</span><span class="od">0</span><span class="od">0</span><span class="op">&quot;</span><span class="op">,</span><span class="op"> </span>job<span class="op">=</span><span class="op">&quot;</span>metax<span class="op">-</span>mx<span class="op">-</span>exporter<span class="op">&quot;</span><span class="op">,</span><span class="op"> </span>modelName<span class="op">=</span><span class="op">&quot;</span>MXC<span class="od">5</span><span class="od">0</span><span class="od">0</span><span class="op"> </span>VF<span class="op">&quot;</span><span class="op">,</span><span class="op"> </span>uuid<span class="op">=</span><span class="op">&quot;</span>GPU<span class="op">-</span><span class="od">4</span><span class="od">7</span><span class="od">0</span><span class="od">9</span>be<span class="o1">1</span><span class="od">9</span><span class="op">-</span>bf<span class="o1">1</span>b<span class="op">-</span><span class="o1">1</span><span class="od">8</span><span class="od">4</span><span class="od">2</span><span class="op">-</span>b<span class="o1">1</span><span class="od">9</span><span class="od">3</span><span class="op">-</span>b<span class="od">2</span><span class="od">2</span><span class="od">3</span><span class="od">7</span><span class="od">9</span>b<span class="od">5</span>e<span class="od">8</span><span class="od">5</span><span class="od">6</span><span class="op">&quot;</span><span class="op">}</span></div><div class="a lm" style="left:38px;top:584.59px;width:14px;height:4px;border-radius:2px;background:#b877d9"></div><div class="a lt t" style="left:60px;top:578.79px;font-size:12px;line-height:16px;color:#ccccdc;--ls:0.7827px;letter-spacing:var(--ls)">gpu<span class="op">_</span>state<span class="op">{</span>Hostname<span class="op">=</span><span class="op">&quot;</span>sysqa<span class="op">-</span>ins<span class="op">-</span>b<span class="o1">1</span><span class="od">6</span><span class="op">&quot;</span><span class="op">,</span><span class="op"> </span>bios<span class="op">_</span>version<span class="op">=</span><span class="op">&quot;</span><span class="o1">1</span><span class="op">.</span><span class="o1">1</span><span class="od">8</span><span class="op">.</span><span class="o1">1</span><span class="op">.</span><span class="od">0</span><span class="op">&quot;</span><span class="op">,</span><span class="op"> </span>deviceId<span class="op">=</span><span class="op">&quot;</span><span class="o1">1</span><span class="od">4</span><span class="op">&quot;</span><span class="op">,</span><span class="op"> </span>driver<span class="op">_</span>version<span class="op">=</span><span class="op">&quot;</span><span class="od">2</span><span class="op">.</span><span class="od">9</span><span class="op">.</span><span class="od">3</span><span class="op">&quot;</span><span class="op">,</span><span class="op"> </span>instance<span class="op">=</span><span class="op">&quot;</span><span class="o1">1</span><span class="od">0</span><span class="op">.</span><span class="od">4</span><span class="od">0</span><span class="op">.</span><span class="o1">1</span><span class="op">.</span><span class="od">7</span><span class="od">3</span><span class="op">:</span><span class="od">8</span><span class="od">0</span><span class="od">0</span><span class="od">0</span><span class="op">&quot;</span><span class="op">,</span><span class="op"> </span>job<span class="op">=</span><span class="op">&quot;</span>metax<span class="op">-</span>mx<span class="op">-</span>exporter<span class="op">&quot;</span><span class="op">,</span><span class="op"> </span>modelName<span class="op">=</span><span class="op">&quot;</span>MXC<span class="od">5</span><span class="od">0</span><span class="od">0</span><span class="op"> </span>VF<span class="op">&quot;</span><span class="op">,</span><span class="op"> </span>uuid<span class="op">=</span><span class="op">&quot;</span>GPU<span class="op">-</span><span class="od">2</span>df<span class="od">5</span><span class="o1">1</span>eac<span class="op">-</span><span class="od">6</span><span class="od">5</span><span class="od">6</span><span class="od">0</span><span class="op">-</span><span class="od">2</span><span class="od">8</span>c<span class="od">6</span><span class="op">-</span>df<span class="od">7</span><span class="od">7</span><span class="op">-</span><span class="od">5</span><span class="od">2</span><span class="od">9</span><span class="od">4</span><span class="od">4</span><span class="od">7</span>a<span class="od">0</span><span class="od">3</span><span class="od">8</span>fa<span class="op">&quot;</span><span class="op">}</span></div><div class="a lm" style="left:1469.4px;top:584.59px;width:14px;height:4px;border-radius:2px;background:#806eb7"></div><div class="a lt t" style="left:1491.2px;top:578.79px;font-size:12px;line-height:16px;color:#ccccdc;--ls:0.7944px;letter-spacing:var(--ls)">gpu<span class="op">_</span>state<span class="op">{</span>Hostname<span class="op">=</span><span class="op">&quot;</span>sysqa<span class="op">-</span>ins<span class="op">-</span>b<span class="o1">1</span><span class="od">6</span><span class="op">&quot;</span><span class="op">,</span><span class="op"> </span>bios<span class="op">_</span>version<span class="op">=</span><span class="op">&quot;</span><span class="o1">1</span><span class="op">.</span><span class="o1">1</span><span class="od">8</span><span class="op">.</span><span class="o1">1</span><span class="op">.</span><span class="od">0</span><span class="op">&quot;</span><span class="op">,</span><span class="op"> </span>deviceId<span class="op">=</span><span class="op">&quot;</span><span class="o1">1</span><span class="od">5</span><span class="op">&quot;</span><span class="op">,</span><span class="op"> </span>driver<span class="op">_</span>version<span class="op">=</span><span class="op">&quot;</span><span class="od">2</span><span class="op">.</span><span class="od">9</span><span class="op">.</span><span class="od">3</span><span class="op">&quot;</span><span class="op">,</span><span class="op"> </span>instance<span class="op">=</span><span class="op">&quot;</span><span class="o1">1</span><span class="od">0</span><span class="op">.</span><span class="od">4</span><span class="od">0</span><span class="op">.</span><span class="o1">1</span><span class="op">.</span><span class="od">7</span><span class="od">3</span><span class="op">:</span><span class="od">8</span><span class="od">0</span><span class="od">0</span><span class="od">0</span><span class="op">&quot;</span><span class="op">,</span><span class="op"> </span>job<span class="op">=</span><span class="op">&quot;</span>metax<span class="op">-</span>mx<span class="op">-</span>exporter<span class="op">&quot;</span><span class="op">,</span><span class="op"> </span>modelName<span class="op">=</span><span class="op">&quot;</span>MXC<span class="od">5</span><span class="od">0</span><span class="od">0</span><span class="op"> </span>VF<span class="op">&quot;</span><span class="op">,</span><span class="op"> </span>uuid<span class="op">=</span><span class="op">&quot;</span>GPU<span class="op">-</span>efb<span class="od">2</span>a<span class="od">5</span>d<span class="od">0</span><span class="op">-</span>cfff<span class="op">-</span>ae<span class="od">9</span><span class="od">8</span><span class="op">-</span><span class="od">0</span><span class="od">9</span>c<span class="od">6</span><span class="op">-</span><span class="od">0</span><span class="od">7</span>f<span class="od">0</span><span class="od">6</span><span class="od">9</span>b<span class="od">9</span><span class="od">0</span><span class="od">2</span><span class="od">6</span><span class="od">8</span><span class="op">&quot;</span><span class="op">}</span></div></div></div></body></html>
